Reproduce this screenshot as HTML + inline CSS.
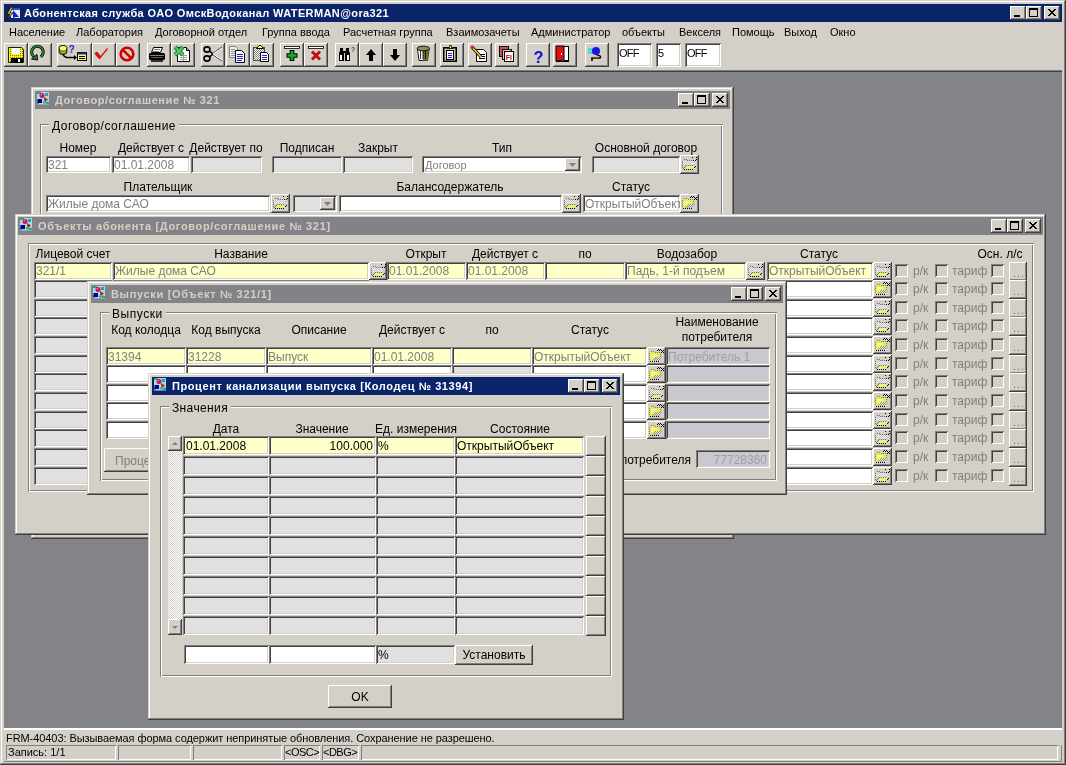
<!DOCTYPE html><html><head><meta charset="utf-8"><style>
*{margin:0;padding:0;box-sizing:border-box}
html,body{width:1066px;height:765px;overflow:hidden}
body{position:relative;background:#D4D0C8;font-family:"Liberation Sans",sans-serif;font-size:11px;color:#000}
div,svg{position:absolute}
.t{white-space:nowrap;will-change:transform}
.rb{background:#D4D0C8;box-shadow:inset -1px -1px #404040,inset 1px 1px #fff,inset -2px -2px #808080}
.fr{box-shadow:inset -1px -1px #404040,inset 1px 1px #D4D0C8,inset -2px -2px #808080,inset 2px 2px #fff}
.sk{box-shadow:inset 1px 1px #808080,inset -1px -1px #fff,inset 2px 2px #404040,inset -2px -2px #D4D0C8}
.gb{box-shadow:inset 1px 1px #808080,inset -1px -1px #fff,inset 2px 2px #fff,inset -2px -2px #808080}
.sp{box-shadow:inset 1px 1px #808080,inset -1px -1px #fff}
</style></head><body>
<svg width="0" height="0"><defs><pattern id="dth" width="2" height="2" patternUnits="userSpaceOnUse"><rect width="2" height="2" fill="#e8e8d8"/><rect width="1" height="1" fill="#909080"/><rect x="1" y="1" width="1" height="1" fill="#909080"/></pattern><pattern id="dthy" width="2" height="2" patternUnits="userSpaceOnUse"><rect width="2" height="2" fill="#f0f000"/><rect width="1" height="1" fill="#808000"/><rect x="1" y="1" width="1" height="1" fill="#ffff40"/></pattern><pattern id="dthg2" width="2" height="2" patternUnits="userSpaceOnUse"><rect width="2" height="2" fill="#f4f4f4"/><rect width="1" height="1" fill="#c4c4c4"/><rect x="1" y="1" width="1" height="1" fill="#c4c4c4"/></pattern><pattern id="dthg" width="2" height="2" patternUnits="userSpaceOnUse"><rect width="2" height="2" fill="#fff"/><rect width="1" height="1" fill="#808080"/><rect x="1" y="1" width="1" height="1" fill="#808080"/></pattern></defs></svg>
<div style="left:0;top:0;width:1066px;height:765px;box-shadow: inset -1px -1px #404040, inset 1px 1px #D4D0C8, inset -2px -2px #808080, inset 2px 2px #fff"></div>
<div style="left:4px;top:4px;width:1058px;height:18px;background:#0A246A"></div>
<svg style="left:5px;top:5px" width="16" height="16"><rect x="6" y="3" width="9" height="10" fill="#e8e8ff"/><rect x="6" y="3" width="9" height="2" fill="#3050c0"/><path d="M8 5 L14 12 L10 12 L8 14 Z" fill="#1820c8"/><path d="M6 2 L2 9 L5 9 L2 15 L8 8 L5 8 L8 2Z" fill="#f0e020" stroke="#000" stroke-width="0.7"/></svg>
<div class="t" style="left:24px;top:7px;font-size:11px;line-height:13px;color:#fff;font-weight:bold;letter-spacing:0.39px;">Абонентская служба ОАО ОмскВодоканал WATERMAN@ora321</div>
<div class="rb" style="left:1010px;top:6px;width:16px;height:14px;"><svg width="16" height="14"><rect x="4" y="9" width="6" height="1"/><rect x="4" y="10" width="6" height="1"/></svg></div>
<div class="rb" style="left:1026px;top:6px;width:16px;height:14px;"><svg width="16" height="14"><rect x="3" y="2" width="9" height="1"/><rect x="3" y="3" width="9" height="1"/><rect x="3" y="4" width="1" height="1"/><rect x="11" y="4" width="1" height="1"/><rect x="3" y="5" width="1" height="1"/><rect x="11" y="5" width="1" height="1"/><rect x="3" y="6" width="1" height="1"/><rect x="11" y="6" width="1" height="1"/><rect x="3" y="7" width="1" height="1"/><rect x="11" y="7" width="1" height="1"/><rect x="3" y="8" width="1" height="1"/><rect x="11" y="8" width="1" height="1"/><rect x="3" y="9" width="1" height="1"/><rect x="11" y="9" width="1" height="1"/><rect x="3" y="10" width="9" height="1"/></svg></div>
<div class="rb" style="left:1044px;top:6px;width:16px;height:14px;"><svg width="16" height="14"><rect x="4" y="3" width="2" height="1"/><rect x="10" y="3" width="2" height="1"/><rect x="5" y="4" width="2" height="1"/><rect x="9" y="4" width="2" height="1"/><rect x="6" y="5" width="4" height="1"/><rect x="7" y="6" width="2" height="1"/><rect x="6" y="7" width="4" height="1"/><rect x="5" y="8" width="2" height="1"/><rect x="9" y="8" width="2" height="1"/><rect x="4" y="9" width="2" height="1"/><rect x="10" y="9" width="2" height="1"/></svg></div>
<div class="t" style="left:9px;top:26px;font-size:11px;line-height:13px;">Население</div>
<div class="t" style="left:76px;top:26px;font-size:11px;line-height:13px;">Лаборатория</div>
<div class="t" style="left:155px;top:26px;font-size:11px;line-height:13px;">Договорной отдел</div>
<div class="t" style="left:262px;top:26px;font-size:11px;line-height:13px;">Группа ввода</div>
<div class="t" style="left:343px;top:26px;font-size:11px;line-height:13px;">Расчетная группа</div>
<div class="t" style="left:446px;top:26px;font-size:11px;line-height:13px;">Взаимозачеты</div>
<div class="t" style="left:531px;top:26px;font-size:11px;line-height:13px;">Администратор</div>
<div class="t" style="left:622px;top:26px;font-size:11px;line-height:13px;">объекты</div>
<div class="t" style="left:679px;top:26px;font-size:11px;line-height:13px;">Векселя</div>
<div class="t" style="left:732px;top:26px;font-size:11px;line-height:13px;">Помощь</div>
<div class="t" style="left:784px;top:26px;font-size:11px;line-height:13px;">Выход</div>
<div class="t" style="left:830px;top:26px;font-size:11px;line-height:13px;">Окно</div>
<div class="rb" style="left:4px;top:43px;width:24px;height:24px;"></div>
<div class="rb" style="left:28px;top:43px;width:24px;height:24px;"></div>
<div class="rb" style="left:57px;top:43px;width:35px;height:24px;"></div>
<div class="rb" style="left:92px;top:43px;width:24px;height:24px;"></div>
<div class="rb" style="left:116px;top:43px;width:24px;height:24px;"></div>
<div class="rb" style="left:147px;top:43px;width:24px;height:24px;"></div>
<div class="rb" style="left:171px;top:43px;width:24px;height:24px;"></div>
<div class="rb" style="left:201px;top:43px;width:24px;height:24px;"></div>
<div class="rb" style="left:226px;top:43px;width:24px;height:24px;"></div>
<div class="rb" style="left:250px;top:43px;width:24px;height:24px;"></div>
<div class="rb" style="left:280px;top:43px;width:24px;height:24px;"></div>
<div class="rb" style="left:304px;top:43px;width:24px;height:24px;"></div>
<div class="rb" style="left:335px;top:43px;width:24px;height:24px;"></div>
<div class="rb" style="left:359px;top:43px;width:24px;height:24px;"></div>
<div class="rb" style="left:383px;top:43px;width:24px;height:24px;"></div>
<div class="rb" style="left:412px;top:43px;width:24px;height:24px;"></div>
<div class="rb" style="left:440px;top:43px;width:24px;height:24px;"></div>
<div class="rb" style="left:468px;top:43px;width:24px;height:24px;"></div>
<div class="rb" style="left:495px;top:43px;width:24px;height:24px;"></div>
<div class="rb" style="left:526px;top:43px;width:24px;height:24px;"></div>
<div class="rb" style="left:553px;top:43px;width:24px;height:24px;"></div>
<div class="rb" style="left:585px;top:43px;width:24px;height:24px;"></div>
<div style="left:4px;top:70px;width:1058px;height:1px;background:#808080"></div>
<div style="left:4px;top:71px;width:1058px;height:1px;background:#404040"></div>
<div class="sk" style="left:617px;top:43px;width:35px;height:24px;background:#fff"></div>
<div class="t" style="left:619px;top:47px;font-size:11px;line-height:13px;letter-spacing:-0.8px;">OFF</div>
<div class="sk" style="left:656px;top:43px;width:25px;height:24px;background:#fff"></div>
<div class="t" style="left:658px;top:47px;font-size:11px;line-height:13px;letter-spacing:-0.8px;">5</div>
<div class="sk" style="left:685px;top:43px;width:36px;height:24px;background:#fff"></div>
<div class="t" style="left:687px;top:47px;font-size:11px;line-height:13px;letter-spacing:-0.8px;">OFF</div>
<svg style="left:8px;top:47px" width="17" height="17"><path d="M0.5 0.5 h13 l2 2 v13 h-15z" fill="url(#dthy)" stroke="#202000"/><rect x="4" y="1" width="8" height="6" fill="#fff"/><rect x="3" y="11" width="12" height="5" fill="#000"/><rect x="10" y="12" width="2" height="3" fill="#fff"/></svg>
<svg style="left:28px;top:44px" width="20" height="20"><path d="M12.7 12.75 A5.8 5.8 0 1 0 5.7 12.4" fill="none" stroke="#000" stroke-width="3.0"/><path d="M12.7 12.75 A5.8 5.8 0 1 0 5.7 12.4" fill="none" stroke="#2a8a2a" stroke-width="1.6"/><path d="M3.5 15 L9.5 16 L9 10.5Z" fill="#2a8a2a" stroke="#000" stroke-width="1"/></svg>
<svg style="left:58px;top:44px" width="30" height="18"><ellipse cx="5" cy="3.5" rx="3.8" ry="2" fill="#ffff60" stroke="#000" stroke-width="0.9"/><path d="M1.2 3.5 v5 a3.8 2 0 0 0 7.6 0 v-5" fill="#ffff60" stroke="#000" stroke-width="0.9"/><path d="M1.2 5.3 a3.8 2 0 0 0 7.6 0 M1.2 7.3 a3.8 2 0 0 0 7.6 0" fill="none" stroke="#000" stroke-width="0.8"/><path d="M5 10.8 Q7 14 11 13.5 H17" fill="none" stroke="#000" stroke-width="1.3"/><path d="M16 11 L19 13.5 L16 16Z" fill="#000"/><text x="10.5" y="9" font-size="10" font-weight="bold" fill="#2828c8" font-family="Liberation Sans">?</text><rect x="19.5" y="8.5" width="9" height="8" fill="#ffff60" stroke="#000" stroke-width="1"/><rect x="19.5" y="8.5" width="9" height="2" fill="#2020a0"/><path d="M21 12.5 h6 M21 14.5 h6" stroke="#000" stroke-width="1"/></svg>
<svg style="left:94px;top:47px" width="16" height="16"><path d="M1 6.5 L5.5 11.5 L13.5 1.5" fill="none" stroke="#d81010" stroke-width="1.3"/><path d="M1.5 6 L5.5 11 L6.5 9.5 L3 5.5Z" fill="#d81010" stroke="#d81010" stroke-width="1.2"/></svg>
<svg style="left:119px;top:46px" width="16" height="16"><circle cx="8" cy="8" r="6.3" fill="none" stroke="#d00000" stroke-width="2.6"/><path d="M3.8 3.8 L12.2 12.2" stroke="#d00000" stroke-width="2.6"/></svg>
<svg style="left:148px;top:46px" width="18" height="17"><path d="M5.5 1.5 h9 l-2 5 h-9z" fill="#fff" stroke="#000"/><path d="M6 3.5 h6 M5 5.5 h6" stroke="#808080"/><path d="M2 7 h14 l1 1 v5 l-1 1 h-14 l-1 -1 v-5z" fill="#000"/><rect x="2" y="9" width="14" height="1" fill="#808080"/><rect x="3" y="11" width="12" height="1" fill="#505050"/><rect x="7" y="11" width="4" height="1" fill="#c04040"/><rect x="3" y="14" width="12" height="2" fill="#303030"/></svg>
<svg style="left:173px;top:45px" width="18" height="18"><path d="M4.5 2.5 h9 l3 3 v11 h-12z" fill="#fff" stroke="#000"/><path d="M13.5 2.5 v3 h3" fill="#c0c0c0" stroke="#000"/><path d="M7 10.5 h7 M7 12.5 h7 M7 14.5 h7 M10.5 9 v7" stroke="#a0a0a0"/><path d="M2 2 L10 10 M10 2 L2 10" stroke="#207a30" stroke-width="4"/><path d="M2 2 L10 10 M10 2 L2 10" stroke="#58c868" stroke-width="2"/></svg>
<svg style="left:203px;top:46px" width="20" height="16"><ellipse cx="4" cy="3.5" rx="3" ry="2.6" fill="none" stroke="#000" stroke-width="1.6"/><ellipse cx="4" cy="12.5" rx="3" ry="2.6" fill="none" stroke="#000" stroke-width="1.6"/><path d="M6.5 5 L10 8 L6.5 11" stroke="#000" stroke-width="1.6" fill="none"/><path d="M9 8 L19 1 M9 8 L19 15" stroke="#000" stroke-width="0.8"/><path d="M10 8 L19 2 M10 8 L19 14" stroke="#fff" stroke-width="1"/></svg>
<svg style="left:228px;top:45px" width="18" height="18"><path d="M1.5 1.5 h6 l2 2 v9 h-8z" fill="#f0f0f0" stroke="#808080"/><path d="M3 4.5 h4 M3 6.5 h4 M3 8.5 h4 M3 10.5 h4" stroke="#909090"/><path d="M7.5 5.5 h6 l3 3 v9 h-9z" fill="#fff" stroke="#000"/><path d="M9 9.5 h6 M9 11.5 h6 M9 13.5 h6 M9 15.5 h5" stroke="#2020d0"/></svg>
<svg style="left:252px;top:44px" width="18" height="19"><rect x="1.5" y="3.5" width="11" height="13" fill="url(#dthg)" stroke="#505050"/><path d="M4.5 4.5 l2.5 -3 h2 l2.5 3 z" fill="#ffff60" stroke="#000"/><path d="M8.5 8.5 h6 l2 2 v7 h-8z" fill="#fff" stroke="#000"/><path d="M10 11.5 h5 M10 13.5 h5 M10 15.5 h5" stroke="#2020d0"/></svg>
<svg style="left:283px;top:45px" width="18" height="18"><rect x="1.5" y="1.5" width="15" height="2" fill="#fff" stroke="#000" stroke-width="0.8"/><path d="M9 5 V16 M3.5 10.5 H14.5" stroke="#000" stroke-width="4.6"/><path d="M9 6 V15 M4.5 10.5 H13.5" stroke="#10b020" stroke-width="2.6"/></svg>
<svg style="left:307px;top:45px" width="18" height="18"><rect x="1.5" y="1.5" width="15" height="2" fill="#fff" stroke="#000" stroke-width="0.8"/><path d="M5 6.5 L13 14.5 M13 6.5 L5 14.5" stroke="#c01010" stroke-width="3"/></svg>
<svg style="left:338px;top:46px" width="18" height="16"><path d="M2 2 h3 v3 h2 v2 h-1 v8 h-5 v-8 l1 -2z" fill="#000"/><path d="M9 2 h3 v3 l1 2 v8 h-5 v-8 h-1 v-2 h2z" fill="#000" transform="translate(-1 0)"/><rect x="2" y="9" width="2" height="5" fill="#fff"/><rect x="9" y="9" width="2" height="5" fill="#fff"/><text x="13" y="6" font-size="7" fill="#000" font-family="Liberation Sans">?</text></svg>
<svg style="left:363px;top:47px" width="16" height="16"><path d="M8 2 L13 8 H10 V14 H6 V8 H3Z" fill="#000"/></svg>
<svg style="left:387px;top:47px" width="16" height="16"><path d="M8 14 L13 8 H10 V2 H6 V8 H3Z" fill="#000"/></svg>
<svg style="left:415px;top:45px" width="17" height="17"><path d="M2.5 4 L4 15.5 H12.5 L14 4Z" fill="#fff" stroke="#000" stroke-width="0.9"/><path d="M8 4 L14 4 L12.5 15.5 H8z" fill="#707030"/><path d="M5.5 6 V14 M8 6 V14 M10.5 6 V14" stroke="#000" stroke-width="0.8"/><ellipse cx="8.3" cy="3.5" rx="6.3" ry="2.3" fill="#909050" stroke="#000" stroke-width="0.9"/></svg>
<svg style="left:442px;top:45px" width="17" height="18"><rect x="1.5" y="2.5" width="13" height="14" fill="#c8c8a0" stroke="#000"/><rect x="2" y="3" width="12" height="13" fill="none" stroke="#000" stroke-width="1"/><path d="M5.5 3.5 v-1 h2 v-2 h2 v2 h2 v1z" fill="#ffff60" stroke="#000" stroke-width="0.8"/><rect x="4.5" y="5.5" width="7" height="9" fill="#fff" stroke="#000"/><path d="M6 8.5 h4 M6 10.5 h4 M6 12.5 h4" stroke="#2020d0"/></svg>
<svg style="left:470px;top:45px" width="18" height="18"><path d="M6.5 4.5 h7 l3 3 v9 h-10z" fill="#fff" stroke="#000"/><path d="M9 9.5 h6 M10 11.5 h5 M9 13.5 h6" stroke="#000"/><path d="M2 2 L11 12" stroke="#000" stroke-width="3.2"/><path d="M2 2 L11 12" stroke="#f0d020" stroke-width="1.6"/><circle cx="2.2" cy="2.2" r="1.7" fill="#e02040"/></svg>
<svg style="left:498px;top:45px" width="17" height="17"><rect x="1.5" y="1.5" width="9" height="10" fill="#c85050" stroke="#000" stroke-width="0.9"/><rect x="4.5" y="4.5" width="9" height="10" fill="#e0c0c0" stroke="#000" stroke-width="0.9"/><rect x="6.5" y="6.5" width="9" height="10" fill="#fff" stroke="#000" stroke-width="1"/><text x="7.8" y="14.5" font-size="7" font-weight="bold" fill="#d00000" font-family="Liberation Sans">FI</text></svg>
<svg style="left:530px;top:47px" width="16" height="18"><text x="3.5" y="16" font-size="16" font-weight="bold" fill="#1010c8" font-family="Liberation Sans">?</text></svg>
<svg style="left:555px;top:45px" width="16" height="18"><rect x="1.5" y="1.5" width="12" height="15" fill="#fff" stroke="#000" stroke-width="1"/><path d="M1 1 H9 V15 L1 16Z" fill="#e01010"/><path d="M1 1 H9 V15 L1 16Z" fill="none" stroke="#000" stroke-width="1"/><rect x="6" y="8" width="1" height="2" fill="#fff"/><path d="M9 15.5 H13" stroke="#000"/></svg>
<svg style="left:587px;top:44px" width="17" height="18"><path d="M1 5.5 h5 M1 8.5 h5" stroke="#20d8e0" stroke-width="2"/><circle cx="9" cy="7" r="4" fill="#1818e0"/><path d="M9.5 11 Q15 11.5 13 14 H5 v3" fill="none" stroke="#000" stroke-width="1.6"/><path d="M10 12 Q13 12.5 12 13 H6" fill="none" stroke="#d0b020" stroke-width="0.8"/></svg>
<div style="left:4px;top:72px;width:1058px;height:656px;background:#848387"></div>
<div style="left:4px;top:728px;width:1058px;height:2px;background:#fff"></div>
<div class="t" style="left:6px;top:732px;font-size:11px;line-height:13px;letter-spacing:-0.07px;">FRM-40403: Вызываемая форма содержит непринятые обновления. Сохранение не разрешено.</div>
<div class="sp" style="left:6px;top:745px;width:110px;height:15px;"></div>
<div class="sp" style="left:118px;top:745px;width:73px;height:15px;"></div>
<div class="sp" style="left:193px;top:745px;width:89px;height:15px;"></div>
<div class="sp" style="left:284px;top:745px;width:36px;height:15px;"></div>
<div class="sp" style="left:322px;top:745px;width:37px;height:15px;"></div>
<div class="sp" style="left:361px;top:745px;width:697px;height:15px;"></div>
<div class="t" style="left:8px;top:746px;font-size:11px;line-height:13px;">Запись: 1/1</div>
<div style="left:4px;top:761px;width:1058px;height:1px;background:#808080"></div>
<div style="left:1061px;top:745px;width:1px;height:17px;background:#808080"></div>
<div class="t" style="left:285px;top:746px;font-size:11px;line-height:13px;letter-spacing:-0.5px;">&lt;OSC&gt;</div>
<div class="t" style="left:323px;top:746px;font-size:11px;line-height:13px;letter-spacing:-0.5px;">&lt;DBG&gt;</div>
<div class="fr" style="left:31px;top:87px;width:703px;height:452px;background:#D4D0C8"></div>
<div style="left:35px;top:91px;width:695px;height:18px;background:#838286"></div>
<svg style="left:36px;top:92px" width="14" height="13"><rect x="1" y="0" width="12" height="12" fill="#a8dce0"/><path d="M1 0 h4 v2 h-4z M9 1 h3 v3 h-3z M1 9 h2 v3 h-2z M10 10 h3 v2 h-3z" fill="#28a0a8"/><rect x="1" y="12" width="12" height="1" fill="#c0a8d0" opacity=".6"/><circle cx="6" cy="3.5" r="2.5" fill="#d0105a"/><circle cx="5.3" cy="2.7" r="0.8" fill="#ff90c0"/><rect x="1.5" y="7" width="4.5" height="4" fill="#000090"/><path d="M8 5 L12 7.5 L8.5 10Z" fill="#c01818"/><rect x="7" y="9.5" width="5" height="2" fill="#30b080"/></svg>
<div class="t" style="left:55px;top:94px;font-size:11px;line-height:13px;color:#D4D0C8;font-weight:bold;letter-spacing:0.59px;">Договор/соглашение № 321</div>
<div class="rb" style="left:678px;top:93px;width:16px;height:14px;"><svg width="16" height="14"><rect x="4" y="9" width="6" height="1"/><rect x="4" y="10" width="6" height="1"/></svg></div>
<div class="rb" style="left:694px;top:93px;width:16px;height:14px;"><svg width="16" height="14"><rect x="3" y="2" width="9" height="1"/><rect x="3" y="3" width="9" height="1"/><rect x="3" y="4" width="1" height="1"/><rect x="11" y="4" width="1" height="1"/><rect x="3" y="5" width="1" height="1"/><rect x="11" y="5" width="1" height="1"/><rect x="3" y="6" width="1" height="1"/><rect x="11" y="6" width="1" height="1"/><rect x="3" y="7" width="1" height="1"/><rect x="11" y="7" width="1" height="1"/><rect x="3" y="8" width="1" height="1"/><rect x="11" y="8" width="1" height="1"/><rect x="3" y="9" width="1" height="1"/><rect x="11" y="9" width="1" height="1"/><rect x="3" y="10" width="9" height="1"/></svg></div>
<div class="rb" style="left:712px;top:93px;width:16px;height:14px;"><svg width="16" height="14"><rect x="4" y="3" width="2" height="1"/><rect x="10" y="3" width="2" height="1"/><rect x="5" y="4" width="2" height="1"/><rect x="9" y="4" width="2" height="1"/><rect x="6" y="5" width="4" height="1"/><rect x="7" y="6" width="2" height="1"/><rect x="6" y="7" width="4" height="1"/><rect x="5" y="8" width="2" height="1"/><rect x="9" y="8" width="2" height="1"/><rect x="4" y="9" width="2" height="1"/><rect x="10" y="9" width="2" height="1"/></svg></div>
<div class="gb" style="left:40px;top:124px;width:683px;height:300px;"></div>
<div class="t" style="left:52px;top:119px;font-size:12px;line-height:14px;letter-spacing:0.47px;background:#D4D0C8;padding:0 3px;margin-left:-3px;">Договор/соглашение</div>
<div class="t" style="left:-72px;top:141px;font-size:12px;line-height:14px;width:300px;text-align:center;">Номер</div>
<div class="t" style="left:1px;top:141px;font-size:12px;line-height:14px;width:300px;text-align:center;">Действует с</div>
<div class="t" style="left:76px;top:141px;font-size:12px;line-height:14px;width:300px;text-align:center;">Действует по</div>
<div class="t" style="left:157px;top:141px;font-size:12px;line-height:14px;width:300px;text-align:center;">Подписан</div>
<div class="t" style="left:228px;top:141px;font-size:12px;line-height:14px;width:300px;text-align:center;">Закрыт</div>
<div class="t" style="left:352px;top:141px;font-size:12px;line-height:14px;width:300px;text-align:center;">Тип</div>
<div class="t" style="left:496px;top:141px;font-size:12px;line-height:14px;width:300px;text-align:center;">Основной договор</div>
<div class="sk" style="left:46px;top:156px;width:65px;height:17px;background:#fff"></div>
<div class="t" style="left:48px;top:158px;font-size:12px;line-height:14px;color:#808080;">321</div>
<div class="sk" style="left:112px;top:156px;width:78px;height:17px;background:#fff"></div>
<div class="t" style="left:114px;top:158px;font-size:12px;line-height:14px;color:#808080;">01.01.2008</div>
<div class="sk" style="left:191px;top:156px;width:71px;height:17px;background:#E0E0E0"></div>
<div class="sk" style="left:272px;top:156px;width:70px;height:17px;background:#E0E0E0"></div>
<div class="sk" style="left:343px;top:156px;width:70px;height:17px;background:#E0E0E0"></div>
<div class="sk" style="left:422px;top:156px;width:160px;height:17px;background:#fff"></div>
<div class="rb" style="left:565px;top:158px;width:15px;height:13px;"><svg width="15" height="13"><path d="M4 5 H11 L7.5 9 Z" fill="#808080"/></svg></div>
<div class="t" style="left:425px;top:159px;font-size:11px;line-height:13px;color:#808080;">Договор</div>
<div class="sk" style="left:592px;top:156px;width:88px;height:17px;background:#E0E0E0"></div>
<div class="rb" style="left:680px;top:155px;width:19px;height:19px;"><svg width="19" height="18"><path d="M3 6 h11 v4 h-11z" fill="url(#dthg2)"/><path d="M6 11 h9 l-3 3 h-8z" fill="#eef070"/><rect x="4" y="4" width="1" height="1" fill="#707070"/><rect x="6" y="4" width="1" height="1" fill="#707070"/><rect x="7" y="5" width="1" height="1" fill="#707070"/><rect x="9" y="5" width="1" height="1" fill="#707070"/><rect x="11" y="5" width="1" height="1" fill="#707070"/><rect x="2" y="6" width="1" height="1" fill="#707070"/><rect x="2" y="8" width="1" height="1" fill="#707070"/><rect x="2" y="10" width="1" height="1" fill="#707070"/><rect x="2" y="12" width="1" height="1" fill="#707070"/><rect x="6" y="10" width="1" height="1" fill="#707070"/><rect x="8" y="10" width="1" height="1" fill="#707070"/><rect x="10" y="10" width="1" height="1" fill="#707070"/><rect x="12" y="10" width="1" height="1" fill="#707070"/><rect x="3" y="13" width="1" height="1" fill="#707070"/><rect x="4" y="12" width="1" height="1" fill="#707070"/><rect x="5" y="11" width="1" height="1" fill="#707070"/><rect x="12" y="2" width="1" height="1" fill="#000"/><rect x="16" y="2" width="1" height="1" fill="#000"/><rect x="16" y="4" width="1" height="1" fill="#000"/><rect x="15" y="5" width="1" height="1" fill="#000"/><rect x="13" y="5" width="1" height="1" fill="#000"/><rect x="4" y="14" width="1" height="1" fill="#000"/><rect x="6" y="14" width="1" height="1" fill="#000"/><rect x="8" y="14" width="1" height="1" fill="#000"/><rect x="10" y="14" width="1" height="1" fill="#000"/><rect x="12" y="14" width="1" height="1" fill="#000"/><rect x="14" y="12" width="1" height="1" fill="#000"/><rect x="15" y="11" width="1" height="1" fill="#000"/></svg></div>
<div class="t" style="left:8px;top:180px;font-size:12px;line-height:14px;width:300px;text-align:center;">Плательщик</div>
<div class="t" style="left:300px;top:180px;font-size:12px;line-height:14px;width:300px;text-align:center;">Балансодержатель</div>
<div class="t" style="left:481px;top:180px;font-size:12px;line-height:14px;width:300px;text-align:center;">Статус</div>
<div class="sk" style="left:46px;top:195px;width:224px;height:17px;background:#fff"></div>
<div class="t" style="left:48px;top:197px;font-size:12px;line-height:14px;color:#808080;">Жилые дома САО</div>
<div class="rb" style="left:271px;top:194px;width:19px;height:19px;"><svg width="19" height="18"><path d="M3 6 h11 v4 h-11z" fill="url(#dthg2)"/><path d="M6 11 h9 l-3 3 h-8z" fill="#eef070"/><rect x="4" y="4" width="1" height="1" fill="#707070"/><rect x="6" y="4" width="1" height="1" fill="#707070"/><rect x="7" y="5" width="1" height="1" fill="#707070"/><rect x="9" y="5" width="1" height="1" fill="#707070"/><rect x="11" y="5" width="1" height="1" fill="#707070"/><rect x="2" y="6" width="1" height="1" fill="#707070"/><rect x="2" y="8" width="1" height="1" fill="#707070"/><rect x="2" y="10" width="1" height="1" fill="#707070"/><rect x="2" y="12" width="1" height="1" fill="#707070"/><rect x="6" y="10" width="1" height="1" fill="#707070"/><rect x="8" y="10" width="1" height="1" fill="#707070"/><rect x="10" y="10" width="1" height="1" fill="#707070"/><rect x="12" y="10" width="1" height="1" fill="#707070"/><rect x="3" y="13" width="1" height="1" fill="#707070"/><rect x="4" y="12" width="1" height="1" fill="#707070"/><rect x="5" y="11" width="1" height="1" fill="#707070"/><rect x="12" y="2" width="1" height="1" fill="#000"/><rect x="16" y="2" width="1" height="1" fill="#000"/><rect x="16" y="4" width="1" height="1" fill="#000"/><rect x="15" y="5" width="1" height="1" fill="#000"/><rect x="13" y="5" width="1" height="1" fill="#000"/><rect x="4" y="14" width="1" height="1" fill="#000"/><rect x="6" y="14" width="1" height="1" fill="#000"/><rect x="8" y="14" width="1" height="1" fill="#000"/><rect x="10" y="14" width="1" height="1" fill="#000"/><rect x="12" y="14" width="1" height="1" fill="#000"/><rect x="14" y="12" width="1" height="1" fill="#000"/><rect x="15" y="11" width="1" height="1" fill="#000"/></svg></div>
<div class="sk" style="left:293px;top:195px;width:44px;height:17px;background:#E0E0E0"></div>
<div class="rb" style="left:320px;top:197px;width:15px;height:13px;"><svg width="15" height="13"><path d="M4 5 H11 L7.5 9 Z" fill="#808080"/></svg></div>
<div class="sk" style="left:339px;top:195px;width:223px;height:17px;background:#fff"></div>
<div class="rb" style="left:562px;top:194px;width:19px;height:19px;"><svg width="19" height="18"><path d="M3 6 h11 v4 h-11z" fill="url(#dthg2)"/><path d="M6 11 h9 l-3 3 h-8z" fill="#eef070"/><rect x="4" y="4" width="1" height="1" fill="#707070"/><rect x="6" y="4" width="1" height="1" fill="#707070"/><rect x="7" y="5" width="1" height="1" fill="#707070"/><rect x="9" y="5" width="1" height="1" fill="#707070"/><rect x="11" y="5" width="1" height="1" fill="#707070"/><rect x="2" y="6" width="1" height="1" fill="#707070"/><rect x="2" y="8" width="1" height="1" fill="#707070"/><rect x="2" y="10" width="1" height="1" fill="#707070"/><rect x="2" y="12" width="1" height="1" fill="#707070"/><rect x="6" y="10" width="1" height="1" fill="#707070"/><rect x="8" y="10" width="1" height="1" fill="#707070"/><rect x="10" y="10" width="1" height="1" fill="#707070"/><rect x="12" y="10" width="1" height="1" fill="#707070"/><rect x="3" y="13" width="1" height="1" fill="#707070"/><rect x="4" y="12" width="1" height="1" fill="#707070"/><rect x="5" y="11" width="1" height="1" fill="#707070"/><rect x="12" y="2" width="1" height="1" fill="#000"/><rect x="16" y="2" width="1" height="1" fill="#000"/><rect x="16" y="4" width="1" height="1" fill="#000"/><rect x="15" y="5" width="1" height="1" fill="#000"/><rect x="13" y="5" width="1" height="1" fill="#000"/><rect x="4" y="14" width="1" height="1" fill="#000"/><rect x="6" y="14" width="1" height="1" fill="#000"/><rect x="8" y="14" width="1" height="1" fill="#000"/><rect x="10" y="14" width="1" height="1" fill="#000"/><rect x="12" y="14" width="1" height="1" fill="#000"/><rect x="14" y="12" width="1" height="1" fill="#000"/><rect x="15" y="11" width="1" height="1" fill="#000"/></svg></div>
<div class="sk" style="left:583px;top:195px;width:97px;height:17px;background:#fff"></div>
<div class="t" style="left:585px;top:197px;font-size:12px;line-height:14px;color:#808080;">ОткрытыйОбъект</div>
<div class="rb" style="left:680px;top:194px;width:19px;height:19px;"><svg width="19" height="18"><path d="M3 5 h4 l1 1 h5 v3 l-1 2 l-3 3 h-6z" fill="#ecec50"/><path d="M4 7 h6 l-2 4 h-4z" fill="#f8f890"/><path d="M8 10 h7 l-3 4 h-7z" fill="url(#dth)"/><rect x="4" y="4" width="1" height="1" fill="#808040"/><rect x="6" y="4" width="1" height="1" fill="#808040"/><rect x="8" y="5" width="1" height="1" fill="#808040"/><rect x="10" y="5" width="1" height="1" fill="#808040"/><rect x="12" y="5" width="1" height="1" fill="#808040"/><rect x="2" y="6" width="1" height="1" fill="#808040"/><rect x="2" y="8" width="1" height="1" fill="#808040"/><rect x="2" y="10" width="1" height="1" fill="#808040"/><rect x="2" y="12" width="1" height="1" fill="#808040"/><rect x="13" y="7" width="1" height="1" fill="#808040"/><rect x="13" y="9" width="1" height="1" fill="#808040"/><rect x="3" y="14" width="1" height="1" fill="#000"/><rect x="5" y="14" width="1" height="1" fill="#000"/><rect x="7" y="14" width="1" height="1" fill="#000"/><rect x="9" y="14" width="1" height="1" fill="#000"/><rect x="11" y="14" width="1" height="1" fill="#000"/><rect x="10" y="3" width="1" height="1" fill="#000"/><rect x="11" y="2" width="1" height="1" fill="#000"/><rect x="13" y="2" width="1" height="1" fill="#000"/><rect x="14" y="3" width="1" height="1" fill="#000"/><rect x="15" y="4" width="1" height="1" fill="#000"/><rect x="16" y="3" width="1" height="1" fill="#000"/><rect x="16" y="5" width="1" height="1" fill="#000"/><rect x="14" y="5" width="1" height="1" fill="#000"/><rect x="12" y="3" width="1" height="1" fill="#000"/></svg></div>
<div class="fr" style="left:15px;top:214px;width:1031px;height:321px;background:#D4D0C8"></div>
<div style="left:18px;top:217px;width:1025px;height:18px;background:#838286"></div>
<svg style="left:19px;top:218px" width="14" height="13"><rect x="1" y="0" width="12" height="12" fill="#a8dce0"/><path d="M1 0 h4 v2 h-4z M9 1 h3 v3 h-3z M1 9 h2 v3 h-2z M10 10 h3 v2 h-3z" fill="#28a0a8"/><rect x="1" y="12" width="12" height="1" fill="#c0a8d0" opacity=".6"/><circle cx="6" cy="3.5" r="2.5" fill="#d0105a"/><circle cx="5.3" cy="2.7" r="0.8" fill="#ff90c0"/><rect x="1.5" y="7" width="4.5" height="4" fill="#000090"/><path d="M8 5 L12 7.5 L8.5 10Z" fill="#c01818"/><rect x="7" y="9.5" width="5" height="2" fill="#30b080"/></svg>
<div class="t" style="left:38px;top:220px;font-size:11px;line-height:13px;color:#D4D0C8;font-weight:bold;letter-spacing:0.66px;">Объекты абонента [Договор/соглашение № 321]</div>
<div class="rb" style="left:991px;top:219px;width:16px;height:14px;"><svg width="16" height="14"><rect x="4" y="9" width="6" height="1"/><rect x="4" y="10" width="6" height="1"/></svg></div>
<div class="rb" style="left:1007px;top:219px;width:16px;height:14px;"><svg width="16" height="14"><rect x="3" y="2" width="9" height="1"/><rect x="3" y="3" width="9" height="1"/><rect x="3" y="4" width="1" height="1"/><rect x="11" y="4" width="1" height="1"/><rect x="3" y="5" width="1" height="1"/><rect x="11" y="5" width="1" height="1"/><rect x="3" y="6" width="1" height="1"/><rect x="11" y="6" width="1" height="1"/><rect x="3" y="7" width="1" height="1"/><rect x="11" y="7" width="1" height="1"/><rect x="3" y="8" width="1" height="1"/><rect x="11" y="8" width="1" height="1"/><rect x="3" y="9" width="1" height="1"/><rect x="11" y="9" width="1" height="1"/><rect x="3" y="10" width="9" height="1"/></svg></div>
<div class="rb" style="left:1025px;top:219px;width:16px;height:14px;"><svg width="16" height="14"><rect x="4" y="3" width="2" height="1"/><rect x="10" y="3" width="2" height="1"/><rect x="5" y="4" width="2" height="1"/><rect x="9" y="4" width="2" height="1"/><rect x="6" y="5" width="4" height="1"/><rect x="7" y="6" width="2" height="1"/><rect x="6" y="7" width="4" height="1"/><rect x="5" y="8" width="2" height="1"/><rect x="9" y="8" width="2" height="1"/><rect x="4" y="9" width="2" height="1"/><rect x="10" y="9" width="2" height="1"/></svg></div>
<div class="gb" style="left:28px;top:243px;width:1006px;height:249px;"></div>
<div class="t" style="left:-77px;top:247px;font-size:12px;line-height:14px;width:300px;text-align:center;">Лицевой счет</div>
<div class="t" style="left:91px;top:247px;font-size:12px;line-height:14px;width:300px;text-align:center;">Название</div>
<div class="t" style="left:276px;top:247px;font-size:12px;line-height:14px;width:300px;text-align:center;">Открыт</div>
<div class="t" style="left:355px;top:247px;font-size:12px;line-height:14px;width:300px;text-align:center;">Действует с</div>
<div class="t" style="left:435px;top:247px;font-size:12px;line-height:14px;width:300px;text-align:center;">по</div>
<div class="t" style="left:537px;top:247px;font-size:12px;line-height:14px;width:300px;text-align:center;">Водозабор</div>
<div class="t" style="left:669px;top:247px;font-size:12px;line-height:14px;width:300px;text-align:center;">Статус</div>
<div class="t" style="left:850px;top:247px;font-size:12px;line-height:14px;width:300px;text-align:center;">Осн. л/с</div>
<div class="sk" style="left:34px;top:262px;width:78px;height:18px;background:#FFFFC8"></div>
<div class="sk" style="left:113px;top:262px;width:256px;height:18px;background:#FFFFC8"></div>
<div class="rb" style="left:369px;top:262px;width:18px;height:18px;"><svg width="19" height="18"><path d="M3 6 h11 v4 h-11z" fill="url(#dthg2)"/><path d="M6 11 h9 l-3 3 h-8z" fill="#eef070"/><rect x="4" y="4" width="1" height="1" fill="#707070"/><rect x="6" y="4" width="1" height="1" fill="#707070"/><rect x="7" y="5" width="1" height="1" fill="#707070"/><rect x="9" y="5" width="1" height="1" fill="#707070"/><rect x="11" y="5" width="1" height="1" fill="#707070"/><rect x="2" y="6" width="1" height="1" fill="#707070"/><rect x="2" y="8" width="1" height="1" fill="#707070"/><rect x="2" y="10" width="1" height="1" fill="#707070"/><rect x="2" y="12" width="1" height="1" fill="#707070"/><rect x="6" y="10" width="1" height="1" fill="#707070"/><rect x="8" y="10" width="1" height="1" fill="#707070"/><rect x="10" y="10" width="1" height="1" fill="#707070"/><rect x="12" y="10" width="1" height="1" fill="#707070"/><rect x="3" y="13" width="1" height="1" fill="#707070"/><rect x="4" y="12" width="1" height="1" fill="#707070"/><rect x="5" y="11" width="1" height="1" fill="#707070"/><rect x="12" y="2" width="1" height="1" fill="#000"/><rect x="16" y="2" width="1" height="1" fill="#000"/><rect x="16" y="4" width="1" height="1" fill="#000"/><rect x="15" y="5" width="1" height="1" fill="#000"/><rect x="13" y="5" width="1" height="1" fill="#000"/><rect x="4" y="14" width="1" height="1" fill="#000"/><rect x="6" y="14" width="1" height="1" fill="#000"/><rect x="8" y="14" width="1" height="1" fill="#000"/><rect x="10" y="14" width="1" height="1" fill="#000"/><rect x="12" y="14" width="1" height="1" fill="#000"/><rect x="14" y="12" width="1" height="1" fill="#000"/><rect x="15" y="11" width="1" height="1" fill="#000"/></svg></div>
<div class="sk" style="left:387px;top:262px;width:79px;height:18px;background:#FFFFC8"></div>
<div class="sk" style="left:466px;top:262px;width:79px;height:18px;background:#FFFFC8"></div>
<div class="sk" style="left:545px;top:262px;width:80px;height:18px;background:#FFFFC8"></div>
<div class="sk" style="left:625px;top:262px;width:121px;height:18px;background:#FFFFC8"></div>
<div class="rb" style="left:746px;top:262px;width:19px;height:18px;"><svg width="19" height="18"><path d="M3 6 h11 v4 h-11z" fill="url(#dthg2)"/><path d="M6 11 h9 l-3 3 h-8z" fill="#eef070"/><rect x="4" y="4" width="1" height="1" fill="#707070"/><rect x="6" y="4" width="1" height="1" fill="#707070"/><rect x="7" y="5" width="1" height="1" fill="#707070"/><rect x="9" y="5" width="1" height="1" fill="#707070"/><rect x="11" y="5" width="1" height="1" fill="#707070"/><rect x="2" y="6" width="1" height="1" fill="#707070"/><rect x="2" y="8" width="1" height="1" fill="#707070"/><rect x="2" y="10" width="1" height="1" fill="#707070"/><rect x="2" y="12" width="1" height="1" fill="#707070"/><rect x="6" y="10" width="1" height="1" fill="#707070"/><rect x="8" y="10" width="1" height="1" fill="#707070"/><rect x="10" y="10" width="1" height="1" fill="#707070"/><rect x="12" y="10" width="1" height="1" fill="#707070"/><rect x="3" y="13" width="1" height="1" fill="#707070"/><rect x="4" y="12" width="1" height="1" fill="#707070"/><rect x="5" y="11" width="1" height="1" fill="#707070"/><rect x="12" y="2" width="1" height="1" fill="#000"/><rect x="16" y="2" width="1" height="1" fill="#000"/><rect x="16" y="4" width="1" height="1" fill="#000"/><rect x="15" y="5" width="1" height="1" fill="#000"/><rect x="13" y="5" width="1" height="1" fill="#000"/><rect x="4" y="14" width="1" height="1" fill="#000"/><rect x="6" y="14" width="1" height="1" fill="#000"/><rect x="8" y="14" width="1" height="1" fill="#000"/><rect x="10" y="14" width="1" height="1" fill="#000"/><rect x="12" y="14" width="1" height="1" fill="#000"/><rect x="14" y="12" width="1" height="1" fill="#000"/><rect x="15" y="11" width="1" height="1" fill="#000"/></svg></div>
<div class="sk" style="left:767px;top:262px;width:106px;height:18px;background:#FFFFC8"></div>
<div class="rb" style="left:873px;top:262px;width:19px;height:18px;"><svg width="19" height="18"><path d="M3 6 h11 v4 h-11z" fill="url(#dthg2)"/><path d="M6 11 h9 l-3 3 h-8z" fill="#eef070"/><rect x="4" y="4" width="1" height="1" fill="#707070"/><rect x="6" y="4" width="1" height="1" fill="#707070"/><rect x="7" y="5" width="1" height="1" fill="#707070"/><rect x="9" y="5" width="1" height="1" fill="#707070"/><rect x="11" y="5" width="1" height="1" fill="#707070"/><rect x="2" y="6" width="1" height="1" fill="#707070"/><rect x="2" y="8" width="1" height="1" fill="#707070"/><rect x="2" y="10" width="1" height="1" fill="#707070"/><rect x="2" y="12" width="1" height="1" fill="#707070"/><rect x="6" y="10" width="1" height="1" fill="#707070"/><rect x="8" y="10" width="1" height="1" fill="#707070"/><rect x="10" y="10" width="1" height="1" fill="#707070"/><rect x="12" y="10" width="1" height="1" fill="#707070"/><rect x="3" y="13" width="1" height="1" fill="#707070"/><rect x="4" y="12" width="1" height="1" fill="#707070"/><rect x="5" y="11" width="1" height="1" fill="#707070"/><rect x="12" y="2" width="1" height="1" fill="#000"/><rect x="16" y="2" width="1" height="1" fill="#000"/><rect x="16" y="4" width="1" height="1" fill="#000"/><rect x="15" y="5" width="1" height="1" fill="#000"/><rect x="13" y="5" width="1" height="1" fill="#000"/><rect x="4" y="14" width="1" height="1" fill="#000"/><rect x="6" y="14" width="1" height="1" fill="#000"/><rect x="8" y="14" width="1" height="1" fill="#000"/><rect x="10" y="14" width="1" height="1" fill="#000"/><rect x="12" y="14" width="1" height="1" fill="#000"/><rect x="14" y="12" width="1" height="1" fill="#000"/><rect x="15" y="11" width="1" height="1" fill="#000"/></svg></div>
<div class="sk" style="left:895px;top:264px;width:13px;height:13px;background:#D4D0C8"></div>
<div class="t" style="left:913px;top:264px;font-size:12px;line-height:14px;color:#808080;">р/к</div>
<div class="sk" style="left:935px;top:264px;width:13px;height:13px;background:#D4D0C8"></div>
<div class="t" style="left:952px;top:264px;font-size:12px;line-height:14px;color:#808080;">тариф</div>
<div class="sk" style="left:991px;top:264px;width:13px;height:13px;background:#D4D0C8"></div>
<div class="rb" style="left:1009px;top:262px;width:18px;height:19px;"><div class="t" style="left:4px;top:5px;font-size:11px;color:#808080;line-height:13px;letter-spacing:1px">...</div></div>
<div class="sk" style="left:34px;top:280px;width:78px;height:18px;background:#E0E0E0"></div>
<div class="sk" style="left:113px;top:280px;width:256px;height:18px;background:#E0E0E0"></div>
<div class="sk" style="left:767px;top:280px;width:106px;height:18px;background:#fff"></div>
<div class="rb" style="left:873px;top:280px;width:19px;height:18px;"><svg width="19" height="18"><path d="M3 5 h4 l1 1 h5 v3 l-1 2 l-3 3 h-6z" fill="#ecec50"/><path d="M4 7 h6 l-2 4 h-4z" fill="#f8f890"/><path d="M8 10 h7 l-3 4 h-7z" fill="url(#dth)"/><rect x="4" y="4" width="1" height="1" fill="#808040"/><rect x="6" y="4" width="1" height="1" fill="#808040"/><rect x="8" y="5" width="1" height="1" fill="#808040"/><rect x="10" y="5" width="1" height="1" fill="#808040"/><rect x="12" y="5" width="1" height="1" fill="#808040"/><rect x="2" y="6" width="1" height="1" fill="#808040"/><rect x="2" y="8" width="1" height="1" fill="#808040"/><rect x="2" y="10" width="1" height="1" fill="#808040"/><rect x="2" y="12" width="1" height="1" fill="#808040"/><rect x="13" y="7" width="1" height="1" fill="#808040"/><rect x="13" y="9" width="1" height="1" fill="#808040"/><rect x="3" y="14" width="1" height="1" fill="#000"/><rect x="5" y="14" width="1" height="1" fill="#000"/><rect x="7" y="14" width="1" height="1" fill="#000"/><rect x="9" y="14" width="1" height="1" fill="#000"/><rect x="11" y="14" width="1" height="1" fill="#000"/><rect x="10" y="3" width="1" height="1" fill="#000"/><rect x="11" y="2" width="1" height="1" fill="#000"/><rect x="13" y="2" width="1" height="1" fill="#000"/><rect x="14" y="3" width="1" height="1" fill="#000"/><rect x="15" y="4" width="1" height="1" fill="#000"/><rect x="16" y="3" width="1" height="1" fill="#000"/><rect x="16" y="5" width="1" height="1" fill="#000"/><rect x="14" y="5" width="1" height="1" fill="#000"/><rect x="12" y="3" width="1" height="1" fill="#000"/></svg></div>
<div class="sk" style="left:895px;top:282px;width:13px;height:13px;background:#D4D0C8"></div>
<div class="t" style="left:913px;top:282px;font-size:12px;line-height:14px;color:#808080;">р/к</div>
<div class="sk" style="left:935px;top:282px;width:13px;height:13px;background:#D4D0C8"></div>
<div class="t" style="left:952px;top:282px;font-size:12px;line-height:14px;color:#808080;">тариф</div>
<div class="sk" style="left:991px;top:282px;width:13px;height:13px;background:#D4D0C8"></div>
<div class="rb" style="left:1009px;top:280px;width:18px;height:19px;"><div class="t" style="left:4px;top:5px;font-size:11px;color:#808080;line-height:13px;letter-spacing:1px">...</div></div>
<div class="sk" style="left:34px;top:299px;width:78px;height:18px;background:#E0E0E0"></div>
<div class="sk" style="left:113px;top:299px;width:256px;height:18px;background:#E0E0E0"></div>
<div class="sk" style="left:767px;top:299px;width:106px;height:18px;background:#fff"></div>
<div class="rb" style="left:873px;top:299px;width:19px;height:18px;"><svg width="19" height="18"><path d="M3 6 h11 v4 h-11z" fill="url(#dthg2)"/><path d="M6 11 h9 l-3 3 h-8z" fill="#eef070"/><rect x="4" y="4" width="1" height="1" fill="#707070"/><rect x="6" y="4" width="1" height="1" fill="#707070"/><rect x="7" y="5" width="1" height="1" fill="#707070"/><rect x="9" y="5" width="1" height="1" fill="#707070"/><rect x="11" y="5" width="1" height="1" fill="#707070"/><rect x="2" y="6" width="1" height="1" fill="#707070"/><rect x="2" y="8" width="1" height="1" fill="#707070"/><rect x="2" y="10" width="1" height="1" fill="#707070"/><rect x="2" y="12" width="1" height="1" fill="#707070"/><rect x="6" y="10" width="1" height="1" fill="#707070"/><rect x="8" y="10" width="1" height="1" fill="#707070"/><rect x="10" y="10" width="1" height="1" fill="#707070"/><rect x="12" y="10" width="1" height="1" fill="#707070"/><rect x="3" y="13" width="1" height="1" fill="#707070"/><rect x="4" y="12" width="1" height="1" fill="#707070"/><rect x="5" y="11" width="1" height="1" fill="#707070"/><rect x="12" y="2" width="1" height="1" fill="#000"/><rect x="16" y="2" width="1" height="1" fill="#000"/><rect x="16" y="4" width="1" height="1" fill="#000"/><rect x="15" y="5" width="1" height="1" fill="#000"/><rect x="13" y="5" width="1" height="1" fill="#000"/><rect x="4" y="14" width="1" height="1" fill="#000"/><rect x="6" y="14" width="1" height="1" fill="#000"/><rect x="8" y="14" width="1" height="1" fill="#000"/><rect x="10" y="14" width="1" height="1" fill="#000"/><rect x="12" y="14" width="1" height="1" fill="#000"/><rect x="14" y="12" width="1" height="1" fill="#000"/><rect x="15" y="11" width="1" height="1" fill="#000"/></svg></div>
<div class="sk" style="left:895px;top:301px;width:13px;height:13px;background:#D4D0C8"></div>
<div class="t" style="left:913px;top:301px;font-size:12px;line-height:14px;color:#808080;">р/к</div>
<div class="sk" style="left:935px;top:301px;width:13px;height:13px;background:#D4D0C8"></div>
<div class="t" style="left:952px;top:301px;font-size:12px;line-height:14px;color:#808080;">тариф</div>
<div class="sk" style="left:991px;top:301px;width:13px;height:13px;background:#D4D0C8"></div>
<div class="rb" style="left:1009px;top:299px;width:18px;height:19px;"><div class="t" style="left:4px;top:5px;font-size:11px;color:#808080;line-height:13px;letter-spacing:1px">...</div></div>
<div class="sk" style="left:34px;top:317px;width:78px;height:18px;background:#E0E0E0"></div>
<div class="sk" style="left:113px;top:317px;width:256px;height:18px;background:#E0E0E0"></div>
<div class="sk" style="left:767px;top:317px;width:106px;height:18px;background:#fff"></div>
<div class="rb" style="left:873px;top:317px;width:19px;height:18px;"><svg width="19" height="18"><path d="M3 6 h11 v4 h-11z" fill="url(#dthg2)"/><path d="M6 11 h9 l-3 3 h-8z" fill="#eef070"/><rect x="4" y="4" width="1" height="1" fill="#707070"/><rect x="6" y="4" width="1" height="1" fill="#707070"/><rect x="7" y="5" width="1" height="1" fill="#707070"/><rect x="9" y="5" width="1" height="1" fill="#707070"/><rect x="11" y="5" width="1" height="1" fill="#707070"/><rect x="2" y="6" width="1" height="1" fill="#707070"/><rect x="2" y="8" width="1" height="1" fill="#707070"/><rect x="2" y="10" width="1" height="1" fill="#707070"/><rect x="2" y="12" width="1" height="1" fill="#707070"/><rect x="6" y="10" width="1" height="1" fill="#707070"/><rect x="8" y="10" width="1" height="1" fill="#707070"/><rect x="10" y="10" width="1" height="1" fill="#707070"/><rect x="12" y="10" width="1" height="1" fill="#707070"/><rect x="3" y="13" width="1" height="1" fill="#707070"/><rect x="4" y="12" width="1" height="1" fill="#707070"/><rect x="5" y="11" width="1" height="1" fill="#707070"/><rect x="12" y="2" width="1" height="1" fill="#000"/><rect x="16" y="2" width="1" height="1" fill="#000"/><rect x="16" y="4" width="1" height="1" fill="#000"/><rect x="15" y="5" width="1" height="1" fill="#000"/><rect x="13" y="5" width="1" height="1" fill="#000"/><rect x="4" y="14" width="1" height="1" fill="#000"/><rect x="6" y="14" width="1" height="1" fill="#000"/><rect x="8" y="14" width="1" height="1" fill="#000"/><rect x="10" y="14" width="1" height="1" fill="#000"/><rect x="12" y="14" width="1" height="1" fill="#000"/><rect x="14" y="12" width="1" height="1" fill="#000"/><rect x="15" y="11" width="1" height="1" fill="#000"/></svg></div>
<div class="sk" style="left:895px;top:319px;width:13px;height:13px;background:#D4D0C8"></div>
<div class="t" style="left:913px;top:319px;font-size:12px;line-height:14px;color:#808080;">р/к</div>
<div class="sk" style="left:935px;top:319px;width:13px;height:13px;background:#D4D0C8"></div>
<div class="t" style="left:952px;top:319px;font-size:12px;line-height:14px;color:#808080;">тариф</div>
<div class="sk" style="left:991px;top:319px;width:13px;height:13px;background:#D4D0C8"></div>
<div class="rb" style="left:1009px;top:317px;width:18px;height:19px;"><div class="t" style="left:4px;top:5px;font-size:11px;color:#808080;line-height:13px;letter-spacing:1px">...</div></div>
<div class="sk" style="left:34px;top:336px;width:78px;height:18px;background:#E0E0E0"></div>
<div class="sk" style="left:113px;top:336px;width:256px;height:18px;background:#E0E0E0"></div>
<div class="sk" style="left:767px;top:336px;width:106px;height:18px;background:#fff"></div>
<div class="rb" style="left:873px;top:336px;width:19px;height:18px;"><svg width="19" height="18"><path d="M3 5 h4 l1 1 h5 v3 l-1 2 l-3 3 h-6z" fill="#ecec50"/><path d="M4 7 h6 l-2 4 h-4z" fill="#f8f890"/><path d="M8 10 h7 l-3 4 h-7z" fill="url(#dth)"/><rect x="4" y="4" width="1" height="1" fill="#808040"/><rect x="6" y="4" width="1" height="1" fill="#808040"/><rect x="8" y="5" width="1" height="1" fill="#808040"/><rect x="10" y="5" width="1" height="1" fill="#808040"/><rect x="12" y="5" width="1" height="1" fill="#808040"/><rect x="2" y="6" width="1" height="1" fill="#808040"/><rect x="2" y="8" width="1" height="1" fill="#808040"/><rect x="2" y="10" width="1" height="1" fill="#808040"/><rect x="2" y="12" width="1" height="1" fill="#808040"/><rect x="13" y="7" width="1" height="1" fill="#808040"/><rect x="13" y="9" width="1" height="1" fill="#808040"/><rect x="3" y="14" width="1" height="1" fill="#000"/><rect x="5" y="14" width="1" height="1" fill="#000"/><rect x="7" y="14" width="1" height="1" fill="#000"/><rect x="9" y="14" width="1" height="1" fill="#000"/><rect x="11" y="14" width="1" height="1" fill="#000"/><rect x="10" y="3" width="1" height="1" fill="#000"/><rect x="11" y="2" width="1" height="1" fill="#000"/><rect x="13" y="2" width="1" height="1" fill="#000"/><rect x="14" y="3" width="1" height="1" fill="#000"/><rect x="15" y="4" width="1" height="1" fill="#000"/><rect x="16" y="3" width="1" height="1" fill="#000"/><rect x="16" y="5" width="1" height="1" fill="#000"/><rect x="14" y="5" width="1" height="1" fill="#000"/><rect x="12" y="3" width="1" height="1" fill="#000"/></svg></div>
<div class="sk" style="left:895px;top:338px;width:13px;height:13px;background:#D4D0C8"></div>
<div class="t" style="left:913px;top:338px;font-size:12px;line-height:14px;color:#808080;">р/к</div>
<div class="sk" style="left:935px;top:338px;width:13px;height:13px;background:#D4D0C8"></div>
<div class="t" style="left:952px;top:338px;font-size:12px;line-height:14px;color:#808080;">тариф</div>
<div class="sk" style="left:991px;top:338px;width:13px;height:13px;background:#D4D0C8"></div>
<div class="rb" style="left:1009px;top:336px;width:18px;height:19px;"><div class="t" style="left:4px;top:5px;font-size:11px;color:#808080;line-height:13px;letter-spacing:1px">...</div></div>
<div class="sk" style="left:34px;top:355px;width:78px;height:18px;background:#E0E0E0"></div>
<div class="sk" style="left:113px;top:355px;width:256px;height:18px;background:#E0E0E0"></div>
<div class="sk" style="left:767px;top:355px;width:106px;height:18px;background:#fff"></div>
<div class="rb" style="left:873px;top:355px;width:19px;height:18px;"><svg width="19" height="18"><path d="M3 6 h11 v4 h-11z" fill="url(#dthg2)"/><path d="M6 11 h9 l-3 3 h-8z" fill="#eef070"/><rect x="4" y="4" width="1" height="1" fill="#707070"/><rect x="6" y="4" width="1" height="1" fill="#707070"/><rect x="7" y="5" width="1" height="1" fill="#707070"/><rect x="9" y="5" width="1" height="1" fill="#707070"/><rect x="11" y="5" width="1" height="1" fill="#707070"/><rect x="2" y="6" width="1" height="1" fill="#707070"/><rect x="2" y="8" width="1" height="1" fill="#707070"/><rect x="2" y="10" width="1" height="1" fill="#707070"/><rect x="2" y="12" width="1" height="1" fill="#707070"/><rect x="6" y="10" width="1" height="1" fill="#707070"/><rect x="8" y="10" width="1" height="1" fill="#707070"/><rect x="10" y="10" width="1" height="1" fill="#707070"/><rect x="12" y="10" width="1" height="1" fill="#707070"/><rect x="3" y="13" width="1" height="1" fill="#707070"/><rect x="4" y="12" width="1" height="1" fill="#707070"/><rect x="5" y="11" width="1" height="1" fill="#707070"/><rect x="12" y="2" width="1" height="1" fill="#000"/><rect x="16" y="2" width="1" height="1" fill="#000"/><rect x="16" y="4" width="1" height="1" fill="#000"/><rect x="15" y="5" width="1" height="1" fill="#000"/><rect x="13" y="5" width="1" height="1" fill="#000"/><rect x="4" y="14" width="1" height="1" fill="#000"/><rect x="6" y="14" width="1" height="1" fill="#000"/><rect x="8" y="14" width="1" height="1" fill="#000"/><rect x="10" y="14" width="1" height="1" fill="#000"/><rect x="12" y="14" width="1" height="1" fill="#000"/><rect x="14" y="12" width="1" height="1" fill="#000"/><rect x="15" y="11" width="1" height="1" fill="#000"/></svg></div>
<div class="sk" style="left:895px;top:357px;width:13px;height:13px;background:#D4D0C8"></div>
<div class="t" style="left:913px;top:357px;font-size:12px;line-height:14px;color:#808080;">р/к</div>
<div class="sk" style="left:935px;top:357px;width:13px;height:13px;background:#D4D0C8"></div>
<div class="t" style="left:952px;top:357px;font-size:12px;line-height:14px;color:#808080;">тариф</div>
<div class="sk" style="left:991px;top:357px;width:13px;height:13px;background:#D4D0C8"></div>
<div class="rb" style="left:1009px;top:355px;width:18px;height:19px;"><div class="t" style="left:4px;top:5px;font-size:11px;color:#808080;line-height:13px;letter-spacing:1px">...</div></div>
<div class="sk" style="left:34px;top:373px;width:78px;height:18px;background:#E0E0E0"></div>
<div class="sk" style="left:113px;top:373px;width:256px;height:18px;background:#E0E0E0"></div>
<div class="sk" style="left:767px;top:373px;width:106px;height:18px;background:#fff"></div>
<div class="rb" style="left:873px;top:373px;width:19px;height:18px;"><svg width="19" height="18"><path d="M3 6 h11 v4 h-11z" fill="url(#dthg2)"/><path d="M6 11 h9 l-3 3 h-8z" fill="#eef070"/><rect x="4" y="4" width="1" height="1" fill="#707070"/><rect x="6" y="4" width="1" height="1" fill="#707070"/><rect x="7" y="5" width="1" height="1" fill="#707070"/><rect x="9" y="5" width="1" height="1" fill="#707070"/><rect x="11" y="5" width="1" height="1" fill="#707070"/><rect x="2" y="6" width="1" height="1" fill="#707070"/><rect x="2" y="8" width="1" height="1" fill="#707070"/><rect x="2" y="10" width="1" height="1" fill="#707070"/><rect x="2" y="12" width="1" height="1" fill="#707070"/><rect x="6" y="10" width="1" height="1" fill="#707070"/><rect x="8" y="10" width="1" height="1" fill="#707070"/><rect x="10" y="10" width="1" height="1" fill="#707070"/><rect x="12" y="10" width="1" height="1" fill="#707070"/><rect x="3" y="13" width="1" height="1" fill="#707070"/><rect x="4" y="12" width="1" height="1" fill="#707070"/><rect x="5" y="11" width="1" height="1" fill="#707070"/><rect x="12" y="2" width="1" height="1" fill="#000"/><rect x="16" y="2" width="1" height="1" fill="#000"/><rect x="16" y="4" width="1" height="1" fill="#000"/><rect x="15" y="5" width="1" height="1" fill="#000"/><rect x="13" y="5" width="1" height="1" fill="#000"/><rect x="4" y="14" width="1" height="1" fill="#000"/><rect x="6" y="14" width="1" height="1" fill="#000"/><rect x="8" y="14" width="1" height="1" fill="#000"/><rect x="10" y="14" width="1" height="1" fill="#000"/><rect x="12" y="14" width="1" height="1" fill="#000"/><rect x="14" y="12" width="1" height="1" fill="#000"/><rect x="15" y="11" width="1" height="1" fill="#000"/></svg></div>
<div class="sk" style="left:895px;top:375px;width:13px;height:13px;background:#D4D0C8"></div>
<div class="t" style="left:913px;top:375px;font-size:12px;line-height:14px;color:#808080;">р/к</div>
<div class="sk" style="left:935px;top:375px;width:13px;height:13px;background:#D4D0C8"></div>
<div class="t" style="left:952px;top:375px;font-size:12px;line-height:14px;color:#808080;">тариф</div>
<div class="sk" style="left:991px;top:375px;width:13px;height:13px;background:#D4D0C8"></div>
<div class="rb" style="left:1009px;top:373px;width:18px;height:19px;"><div class="t" style="left:4px;top:5px;font-size:11px;color:#808080;line-height:13px;letter-spacing:1px">...</div></div>
<div class="sk" style="left:34px;top:392px;width:78px;height:18px;background:#E0E0E0"></div>
<div class="sk" style="left:113px;top:392px;width:256px;height:18px;background:#E0E0E0"></div>
<div class="sk" style="left:767px;top:392px;width:106px;height:18px;background:#fff"></div>
<div class="rb" style="left:873px;top:392px;width:19px;height:18px;"><svg width="19" height="18"><path d="M3 5 h4 l1 1 h5 v3 l-1 2 l-3 3 h-6z" fill="#ecec50"/><path d="M4 7 h6 l-2 4 h-4z" fill="#f8f890"/><path d="M8 10 h7 l-3 4 h-7z" fill="url(#dth)"/><rect x="4" y="4" width="1" height="1" fill="#808040"/><rect x="6" y="4" width="1" height="1" fill="#808040"/><rect x="8" y="5" width="1" height="1" fill="#808040"/><rect x="10" y="5" width="1" height="1" fill="#808040"/><rect x="12" y="5" width="1" height="1" fill="#808040"/><rect x="2" y="6" width="1" height="1" fill="#808040"/><rect x="2" y="8" width="1" height="1" fill="#808040"/><rect x="2" y="10" width="1" height="1" fill="#808040"/><rect x="2" y="12" width="1" height="1" fill="#808040"/><rect x="13" y="7" width="1" height="1" fill="#808040"/><rect x="13" y="9" width="1" height="1" fill="#808040"/><rect x="3" y="14" width="1" height="1" fill="#000"/><rect x="5" y="14" width="1" height="1" fill="#000"/><rect x="7" y="14" width="1" height="1" fill="#000"/><rect x="9" y="14" width="1" height="1" fill="#000"/><rect x="11" y="14" width="1" height="1" fill="#000"/><rect x="10" y="3" width="1" height="1" fill="#000"/><rect x="11" y="2" width="1" height="1" fill="#000"/><rect x="13" y="2" width="1" height="1" fill="#000"/><rect x="14" y="3" width="1" height="1" fill="#000"/><rect x="15" y="4" width="1" height="1" fill="#000"/><rect x="16" y="3" width="1" height="1" fill="#000"/><rect x="16" y="5" width="1" height="1" fill="#000"/><rect x="14" y="5" width="1" height="1" fill="#000"/><rect x="12" y="3" width="1" height="1" fill="#000"/></svg></div>
<div class="sk" style="left:895px;top:394px;width:13px;height:13px;background:#D4D0C8"></div>
<div class="t" style="left:913px;top:394px;font-size:12px;line-height:14px;color:#808080;">р/к</div>
<div class="sk" style="left:935px;top:394px;width:13px;height:13px;background:#D4D0C8"></div>
<div class="t" style="left:952px;top:394px;font-size:12px;line-height:14px;color:#808080;">тариф</div>
<div class="sk" style="left:991px;top:394px;width:13px;height:13px;background:#D4D0C8"></div>
<div class="rb" style="left:1009px;top:392px;width:18px;height:19px;"><div class="t" style="left:4px;top:5px;font-size:11px;color:#808080;line-height:13px;letter-spacing:1px">...</div></div>
<div class="sk" style="left:34px;top:411px;width:78px;height:18px;background:#E0E0E0"></div>
<div class="sk" style="left:113px;top:411px;width:256px;height:18px;background:#E0E0E0"></div>
<div class="sk" style="left:767px;top:411px;width:106px;height:18px;background:#fff"></div>
<div class="rb" style="left:873px;top:411px;width:19px;height:18px;"><svg width="19" height="18"><path d="M3 6 h11 v4 h-11z" fill="url(#dthg2)"/><path d="M6 11 h9 l-3 3 h-8z" fill="#eef070"/><rect x="4" y="4" width="1" height="1" fill="#707070"/><rect x="6" y="4" width="1" height="1" fill="#707070"/><rect x="7" y="5" width="1" height="1" fill="#707070"/><rect x="9" y="5" width="1" height="1" fill="#707070"/><rect x="11" y="5" width="1" height="1" fill="#707070"/><rect x="2" y="6" width="1" height="1" fill="#707070"/><rect x="2" y="8" width="1" height="1" fill="#707070"/><rect x="2" y="10" width="1" height="1" fill="#707070"/><rect x="2" y="12" width="1" height="1" fill="#707070"/><rect x="6" y="10" width="1" height="1" fill="#707070"/><rect x="8" y="10" width="1" height="1" fill="#707070"/><rect x="10" y="10" width="1" height="1" fill="#707070"/><rect x="12" y="10" width="1" height="1" fill="#707070"/><rect x="3" y="13" width="1" height="1" fill="#707070"/><rect x="4" y="12" width="1" height="1" fill="#707070"/><rect x="5" y="11" width="1" height="1" fill="#707070"/><rect x="12" y="2" width="1" height="1" fill="#000"/><rect x="16" y="2" width="1" height="1" fill="#000"/><rect x="16" y="4" width="1" height="1" fill="#000"/><rect x="15" y="5" width="1" height="1" fill="#000"/><rect x="13" y="5" width="1" height="1" fill="#000"/><rect x="4" y="14" width="1" height="1" fill="#000"/><rect x="6" y="14" width="1" height="1" fill="#000"/><rect x="8" y="14" width="1" height="1" fill="#000"/><rect x="10" y="14" width="1" height="1" fill="#000"/><rect x="12" y="14" width="1" height="1" fill="#000"/><rect x="14" y="12" width="1" height="1" fill="#000"/><rect x="15" y="11" width="1" height="1" fill="#000"/></svg></div>
<div class="sk" style="left:895px;top:413px;width:13px;height:13px;background:#D4D0C8"></div>
<div class="t" style="left:913px;top:413px;font-size:12px;line-height:14px;color:#808080;">р/к</div>
<div class="sk" style="left:935px;top:413px;width:13px;height:13px;background:#D4D0C8"></div>
<div class="t" style="left:952px;top:413px;font-size:12px;line-height:14px;color:#808080;">тариф</div>
<div class="sk" style="left:991px;top:413px;width:13px;height:13px;background:#D4D0C8"></div>
<div class="rb" style="left:1009px;top:411px;width:18px;height:19px;"><div class="t" style="left:4px;top:5px;font-size:11px;color:#808080;line-height:13px;letter-spacing:1px">...</div></div>
<div class="sk" style="left:34px;top:429px;width:78px;height:18px;background:#E0E0E0"></div>
<div class="sk" style="left:113px;top:429px;width:256px;height:18px;background:#E0E0E0"></div>
<div class="sk" style="left:767px;top:429px;width:106px;height:18px;background:#fff"></div>
<div class="rb" style="left:873px;top:429px;width:19px;height:18px;"><svg width="19" height="18"><path d="M3 6 h11 v4 h-11z" fill="url(#dthg2)"/><path d="M6 11 h9 l-3 3 h-8z" fill="#eef070"/><rect x="4" y="4" width="1" height="1" fill="#707070"/><rect x="6" y="4" width="1" height="1" fill="#707070"/><rect x="7" y="5" width="1" height="1" fill="#707070"/><rect x="9" y="5" width="1" height="1" fill="#707070"/><rect x="11" y="5" width="1" height="1" fill="#707070"/><rect x="2" y="6" width="1" height="1" fill="#707070"/><rect x="2" y="8" width="1" height="1" fill="#707070"/><rect x="2" y="10" width="1" height="1" fill="#707070"/><rect x="2" y="12" width="1" height="1" fill="#707070"/><rect x="6" y="10" width="1" height="1" fill="#707070"/><rect x="8" y="10" width="1" height="1" fill="#707070"/><rect x="10" y="10" width="1" height="1" fill="#707070"/><rect x="12" y="10" width="1" height="1" fill="#707070"/><rect x="3" y="13" width="1" height="1" fill="#707070"/><rect x="4" y="12" width="1" height="1" fill="#707070"/><rect x="5" y="11" width="1" height="1" fill="#707070"/><rect x="12" y="2" width="1" height="1" fill="#000"/><rect x="16" y="2" width="1" height="1" fill="#000"/><rect x="16" y="4" width="1" height="1" fill="#000"/><rect x="15" y="5" width="1" height="1" fill="#000"/><rect x="13" y="5" width="1" height="1" fill="#000"/><rect x="4" y="14" width="1" height="1" fill="#000"/><rect x="6" y="14" width="1" height="1" fill="#000"/><rect x="8" y="14" width="1" height="1" fill="#000"/><rect x="10" y="14" width="1" height="1" fill="#000"/><rect x="12" y="14" width="1" height="1" fill="#000"/><rect x="14" y="12" width="1" height="1" fill="#000"/><rect x="15" y="11" width="1" height="1" fill="#000"/></svg></div>
<div class="sk" style="left:895px;top:431px;width:13px;height:13px;background:#D4D0C8"></div>
<div class="t" style="left:913px;top:431px;font-size:12px;line-height:14px;color:#808080;">р/к</div>
<div class="sk" style="left:935px;top:431px;width:13px;height:13px;background:#D4D0C8"></div>
<div class="t" style="left:952px;top:431px;font-size:12px;line-height:14px;color:#808080;">тариф</div>
<div class="sk" style="left:991px;top:431px;width:13px;height:13px;background:#D4D0C8"></div>
<div class="rb" style="left:1009px;top:429px;width:18px;height:19px;"><div class="t" style="left:4px;top:5px;font-size:11px;color:#808080;line-height:13px;letter-spacing:1px">...</div></div>
<div class="sk" style="left:34px;top:448px;width:78px;height:18px;background:#E0E0E0"></div>
<div class="sk" style="left:113px;top:448px;width:256px;height:18px;background:#E0E0E0"></div>
<div class="sk" style="left:767px;top:448px;width:106px;height:18px;background:#fff"></div>
<div class="rb" style="left:873px;top:448px;width:19px;height:18px;"><svg width="19" height="18"><path d="M3 5 h4 l1 1 h5 v3 l-1 2 l-3 3 h-6z" fill="#ecec50"/><path d="M4 7 h6 l-2 4 h-4z" fill="#f8f890"/><path d="M8 10 h7 l-3 4 h-7z" fill="url(#dth)"/><rect x="4" y="4" width="1" height="1" fill="#808040"/><rect x="6" y="4" width="1" height="1" fill="#808040"/><rect x="8" y="5" width="1" height="1" fill="#808040"/><rect x="10" y="5" width="1" height="1" fill="#808040"/><rect x="12" y="5" width="1" height="1" fill="#808040"/><rect x="2" y="6" width="1" height="1" fill="#808040"/><rect x="2" y="8" width="1" height="1" fill="#808040"/><rect x="2" y="10" width="1" height="1" fill="#808040"/><rect x="2" y="12" width="1" height="1" fill="#808040"/><rect x="13" y="7" width="1" height="1" fill="#808040"/><rect x="13" y="9" width="1" height="1" fill="#808040"/><rect x="3" y="14" width="1" height="1" fill="#000"/><rect x="5" y="14" width="1" height="1" fill="#000"/><rect x="7" y="14" width="1" height="1" fill="#000"/><rect x="9" y="14" width="1" height="1" fill="#000"/><rect x="11" y="14" width="1" height="1" fill="#000"/><rect x="10" y="3" width="1" height="1" fill="#000"/><rect x="11" y="2" width="1" height="1" fill="#000"/><rect x="13" y="2" width="1" height="1" fill="#000"/><rect x="14" y="3" width="1" height="1" fill="#000"/><rect x="15" y="4" width="1" height="1" fill="#000"/><rect x="16" y="3" width="1" height="1" fill="#000"/><rect x="16" y="5" width="1" height="1" fill="#000"/><rect x="14" y="5" width="1" height="1" fill="#000"/><rect x="12" y="3" width="1" height="1" fill="#000"/></svg></div>
<div class="sk" style="left:895px;top:450px;width:13px;height:13px;background:#D4D0C8"></div>
<div class="t" style="left:913px;top:450px;font-size:12px;line-height:14px;color:#808080;">р/к</div>
<div class="sk" style="left:935px;top:450px;width:13px;height:13px;background:#D4D0C8"></div>
<div class="t" style="left:952px;top:450px;font-size:12px;line-height:14px;color:#808080;">тариф</div>
<div class="sk" style="left:991px;top:450px;width:13px;height:13px;background:#D4D0C8"></div>
<div class="rb" style="left:1009px;top:448px;width:18px;height:19px;"><div class="t" style="left:4px;top:5px;font-size:11px;color:#808080;line-height:13px;letter-spacing:1px">...</div></div>
<div class="sk" style="left:34px;top:467px;width:78px;height:18px;background:#E0E0E0"></div>
<div class="sk" style="left:113px;top:467px;width:256px;height:18px;background:#E0E0E0"></div>
<div class="sk" style="left:767px;top:467px;width:106px;height:18px;background:#fff"></div>
<div class="rb" style="left:873px;top:467px;width:19px;height:18px;"><svg width="19" height="18"><path d="M3 6 h11 v4 h-11z" fill="url(#dthg2)"/><path d="M6 11 h9 l-3 3 h-8z" fill="#eef070"/><rect x="4" y="4" width="1" height="1" fill="#707070"/><rect x="6" y="4" width="1" height="1" fill="#707070"/><rect x="7" y="5" width="1" height="1" fill="#707070"/><rect x="9" y="5" width="1" height="1" fill="#707070"/><rect x="11" y="5" width="1" height="1" fill="#707070"/><rect x="2" y="6" width="1" height="1" fill="#707070"/><rect x="2" y="8" width="1" height="1" fill="#707070"/><rect x="2" y="10" width="1" height="1" fill="#707070"/><rect x="2" y="12" width="1" height="1" fill="#707070"/><rect x="6" y="10" width="1" height="1" fill="#707070"/><rect x="8" y="10" width="1" height="1" fill="#707070"/><rect x="10" y="10" width="1" height="1" fill="#707070"/><rect x="12" y="10" width="1" height="1" fill="#707070"/><rect x="3" y="13" width="1" height="1" fill="#707070"/><rect x="4" y="12" width="1" height="1" fill="#707070"/><rect x="5" y="11" width="1" height="1" fill="#707070"/><rect x="12" y="2" width="1" height="1" fill="#000"/><rect x="16" y="2" width="1" height="1" fill="#000"/><rect x="16" y="4" width="1" height="1" fill="#000"/><rect x="15" y="5" width="1" height="1" fill="#000"/><rect x="13" y="5" width="1" height="1" fill="#000"/><rect x="4" y="14" width="1" height="1" fill="#000"/><rect x="6" y="14" width="1" height="1" fill="#000"/><rect x="8" y="14" width="1" height="1" fill="#000"/><rect x="10" y="14" width="1" height="1" fill="#000"/><rect x="12" y="14" width="1" height="1" fill="#000"/><rect x="14" y="12" width="1" height="1" fill="#000"/><rect x="15" y="11" width="1" height="1" fill="#000"/></svg></div>
<div class="sk" style="left:895px;top:469px;width:13px;height:13px;background:#D4D0C8"></div>
<div class="t" style="left:913px;top:469px;font-size:12px;line-height:14px;color:#808080;">р/к</div>
<div class="sk" style="left:935px;top:469px;width:13px;height:13px;background:#D4D0C8"></div>
<div class="t" style="left:952px;top:469px;font-size:12px;line-height:14px;color:#808080;">тариф</div>
<div class="sk" style="left:991px;top:469px;width:13px;height:13px;background:#D4D0C8"></div>
<div class="rb" style="left:1009px;top:467px;width:18px;height:19px;"><div class="t" style="left:4px;top:5px;font-size:11px;color:#808080;line-height:13px;letter-spacing:1px">...</div></div>
<div class="t" style="left:36px;top:264px;font-size:12px;line-height:14px;color:#808080;">321/1</div>
<div class="t" style="left:115px;top:264px;font-size:12px;line-height:14px;color:#808080;">Жилые дома САО</div>
<div class="t" style="left:389px;top:264px;font-size:12px;line-height:14px;color:#808080;">01.01.2008</div>
<div class="t" style="left:468px;top:264px;font-size:12px;line-height:14px;color:#808080;">01.01.2008</div>
<div class="t" style="left:627px;top:264px;font-size:12px;line-height:14px;color:#808080;">Падь, 1-й подъем</div>
<div class="t" style="left:769px;top:264px;font-size:12px;line-height:14px;color:#808080;">ОткрытыйОбъект</div>
<div class="fr" style="left:87px;top:281px;width:700px;height:214px;background:#D4D0C8"></div>
<div style="left:91px;top:285px;width:692px;height:18px;background:#838286"></div>
<svg style="left:92px;top:286px" width="14" height="13"><rect x="1" y="0" width="12" height="12" fill="#a8dce0"/><path d="M1 0 h4 v2 h-4z M9 1 h3 v3 h-3z M1 9 h2 v3 h-2z M10 10 h3 v2 h-3z" fill="#28a0a8"/><rect x="1" y="12" width="12" height="1" fill="#c0a8d0" opacity=".6"/><circle cx="6" cy="3.5" r="2.5" fill="#d0105a"/><circle cx="5.3" cy="2.7" r="0.8" fill="#ff90c0"/><rect x="1.5" y="7" width="4.5" height="4" fill="#000090"/><path d="M8 5 L12 7.5 L8.5 10Z" fill="#c01818"/><rect x="7" y="9.5" width="5" height="2" fill="#30b080"/></svg>
<div class="t" style="left:111px;top:288px;font-size:11px;line-height:13px;color:#D4D0C8;font-weight:bold;letter-spacing:0.67px;">Выпуски [Объект № 321/1]</div>
<div class="rb" style="left:731px;top:287px;width:16px;height:14px;"><svg width="16" height="14"><rect x="4" y="9" width="6" height="1"/><rect x="4" y="10" width="6" height="1"/></svg></div>
<div class="rb" style="left:747px;top:287px;width:16px;height:14px;"><svg width="16" height="14"><rect x="3" y="2" width="9" height="1"/><rect x="3" y="3" width="9" height="1"/><rect x="3" y="4" width="1" height="1"/><rect x="11" y="4" width="1" height="1"/><rect x="3" y="5" width="1" height="1"/><rect x="11" y="5" width="1" height="1"/><rect x="3" y="6" width="1" height="1"/><rect x="11" y="6" width="1" height="1"/><rect x="3" y="7" width="1" height="1"/><rect x="11" y="7" width="1" height="1"/><rect x="3" y="8" width="1" height="1"/><rect x="11" y="8" width="1" height="1"/><rect x="3" y="9" width="1" height="1"/><rect x="11" y="9" width="1" height="1"/><rect x="3" y="10" width="9" height="1"/></svg></div>
<div class="rb" style="left:765px;top:287px;width:16px;height:14px;"><svg width="16" height="14"><rect x="4" y="3" width="2" height="1"/><rect x="10" y="3" width="2" height="1"/><rect x="5" y="4" width="2" height="1"/><rect x="9" y="4" width="2" height="1"/><rect x="6" y="5" width="4" height="1"/><rect x="7" y="6" width="2" height="1"/><rect x="6" y="7" width="4" height="1"/><rect x="5" y="8" width="2" height="1"/><rect x="9" y="8" width="2" height="1"/><rect x="4" y="9" width="2" height="1"/><rect x="10" y="9" width="2" height="1"/></svg></div>
<div class="gb" style="left:100px;top:312px;width:677px;height:169px;"></div>
<div class="t" style="left:112px;top:307px;font-size:12px;line-height:14px;letter-spacing:0.55px;background:#D4D0C8;padding:0 3px;margin-left:-3px;">Выпуски</div>
<div class="t" style="left:-4px;top:323px;font-size:12px;line-height:14px;width:300px;text-align:center;">Код колодца</div>
<div class="t" style="left:76px;top:323px;font-size:12px;line-height:14px;width:300px;text-align:center;">Код выпуска</div>
<div class="t" style="left:169px;top:323px;font-size:12px;line-height:14px;width:300px;text-align:center;">Описание</div>
<div class="t" style="left:262px;top:323px;font-size:12px;line-height:14px;width:300px;text-align:center;">Действует с</div>
<div class="t" style="left:342px;top:323px;font-size:12px;line-height:14px;width:300px;text-align:center;">по</div>
<div class="t" style="left:440px;top:323px;font-size:12px;line-height:14px;width:300px;text-align:center;">Статус</div>
<div class="t" style="left:567px;top:315px;font-size:12px;line-height:14px;width:300px;text-align:center;">Наименование</div>
<div class="t" style="left:567px;top:330px;font-size:12px;line-height:14px;width:300px;text-align:center;">потребителя</div>
<div class="sk" style="left:106px;top:347px;width:80px;height:18px;background:#FFFFC8"></div>
<div class="sk" style="left:186px;top:347px;width:80px;height:18px;background:#FFFFC8"></div>
<div class="sk" style="left:266px;top:347px;width:106px;height:18px;background:#FFFFC8"></div>
<div class="sk" style="left:372px;top:347px;width:80px;height:18px;background:#FFFFC8"></div>
<div class="sk" style="left:452px;top:347px;width:80px;height:18px;background:#FFFFC8"></div>
<div class="sk" style="left:532px;top:347px;width:115px;height:18px;background:#FFFFC8"></div>
<div class="rb" style="left:647px;top:347px;width:19px;height:18px;"><svg width="19" height="18"><path d="M3 5 h4 l1 1 h5 v3 l-1 2 l-3 3 h-6z" fill="#ecec50"/><path d="M4 7 h6 l-2 4 h-4z" fill="#f8f890"/><path d="M8 10 h7 l-3 4 h-7z" fill="url(#dth)"/><rect x="4" y="4" width="1" height="1" fill="#808040"/><rect x="6" y="4" width="1" height="1" fill="#808040"/><rect x="8" y="5" width="1" height="1" fill="#808040"/><rect x="10" y="5" width="1" height="1" fill="#808040"/><rect x="12" y="5" width="1" height="1" fill="#808040"/><rect x="2" y="6" width="1" height="1" fill="#808040"/><rect x="2" y="8" width="1" height="1" fill="#808040"/><rect x="2" y="10" width="1" height="1" fill="#808040"/><rect x="2" y="12" width="1" height="1" fill="#808040"/><rect x="13" y="7" width="1" height="1" fill="#808040"/><rect x="13" y="9" width="1" height="1" fill="#808040"/><rect x="3" y="14" width="1" height="1" fill="#000"/><rect x="5" y="14" width="1" height="1" fill="#000"/><rect x="7" y="14" width="1" height="1" fill="#000"/><rect x="9" y="14" width="1" height="1" fill="#000"/><rect x="11" y="14" width="1" height="1" fill="#000"/><rect x="10" y="3" width="1" height="1" fill="#000"/><rect x="11" y="2" width="1" height="1" fill="#000"/><rect x="13" y="2" width="1" height="1" fill="#000"/><rect x="14" y="3" width="1" height="1" fill="#000"/><rect x="15" y="4" width="1" height="1" fill="#000"/><rect x="16" y="3" width="1" height="1" fill="#000"/><rect x="16" y="5" width="1" height="1" fill="#000"/><rect x="14" y="5" width="1" height="1" fill="#000"/><rect x="12" y="3" width="1" height="1" fill="#000"/></svg></div>
<div class="sk" style="left:666px;top:347px;width:104px;height:18px;background:#C9C8CE"></div>
<div class="sk" style="left:106px;top:365px;width:80px;height:18px;background:#fff"></div>
<div class="sk" style="left:186px;top:365px;width:80px;height:18px;background:#fff"></div>
<div class="sk" style="left:266px;top:365px;width:106px;height:18px;background:#fff"></div>
<div class="sk" style="left:372px;top:365px;width:80px;height:18px;background:#fff"></div>
<div class="sk" style="left:452px;top:365px;width:80px;height:18px;background:#E0E0E0"></div>
<div class="sk" style="left:532px;top:365px;width:115px;height:18px;background:#fff"></div>
<div class="rb" style="left:647px;top:365px;width:19px;height:18px;"><svg width="19" height="18"><path d="M3 5 h4 l1 1 h5 v3 l-1 2 l-3 3 h-6z" fill="#ecec50"/><path d="M4 7 h6 l-2 4 h-4z" fill="#f8f890"/><path d="M8 10 h7 l-3 4 h-7z" fill="url(#dth)"/><rect x="4" y="4" width="1" height="1" fill="#808040"/><rect x="6" y="4" width="1" height="1" fill="#808040"/><rect x="8" y="5" width="1" height="1" fill="#808040"/><rect x="10" y="5" width="1" height="1" fill="#808040"/><rect x="12" y="5" width="1" height="1" fill="#808040"/><rect x="2" y="6" width="1" height="1" fill="#808040"/><rect x="2" y="8" width="1" height="1" fill="#808040"/><rect x="2" y="10" width="1" height="1" fill="#808040"/><rect x="2" y="12" width="1" height="1" fill="#808040"/><rect x="13" y="7" width="1" height="1" fill="#808040"/><rect x="13" y="9" width="1" height="1" fill="#808040"/><rect x="3" y="14" width="1" height="1" fill="#000"/><rect x="5" y="14" width="1" height="1" fill="#000"/><rect x="7" y="14" width="1" height="1" fill="#000"/><rect x="9" y="14" width="1" height="1" fill="#000"/><rect x="11" y="14" width="1" height="1" fill="#000"/><rect x="10" y="3" width="1" height="1" fill="#000"/><rect x="11" y="2" width="1" height="1" fill="#000"/><rect x="13" y="2" width="1" height="1" fill="#000"/><rect x="14" y="3" width="1" height="1" fill="#000"/><rect x="15" y="4" width="1" height="1" fill="#000"/><rect x="16" y="3" width="1" height="1" fill="#000"/><rect x="16" y="5" width="1" height="1" fill="#000"/><rect x="14" y="5" width="1" height="1" fill="#000"/><rect x="12" y="3" width="1" height="1" fill="#000"/></svg></div>
<div class="sk" style="left:666px;top:365px;width:104px;height:18px;background:#C9C8CE"></div>
<div class="sk" style="left:106px;top:384px;width:80px;height:18px;background:#fff"></div>
<div class="sk" style="left:186px;top:384px;width:80px;height:18px;background:#fff"></div>
<div class="sk" style="left:266px;top:384px;width:106px;height:18px;background:#fff"></div>
<div class="sk" style="left:372px;top:384px;width:80px;height:18px;background:#fff"></div>
<div class="sk" style="left:452px;top:384px;width:80px;height:18px;background:#E0E0E0"></div>
<div class="sk" style="left:532px;top:384px;width:115px;height:18px;background:#fff"></div>
<div class="rb" style="left:647px;top:384px;width:19px;height:18px;"><svg width="19" height="18"><path d="M3 6 h11 v4 h-11z" fill="url(#dthg2)"/><path d="M6 11 h9 l-3 3 h-8z" fill="#eef070"/><rect x="4" y="4" width="1" height="1" fill="#707070"/><rect x="6" y="4" width="1" height="1" fill="#707070"/><rect x="7" y="5" width="1" height="1" fill="#707070"/><rect x="9" y="5" width="1" height="1" fill="#707070"/><rect x="11" y="5" width="1" height="1" fill="#707070"/><rect x="2" y="6" width="1" height="1" fill="#707070"/><rect x="2" y="8" width="1" height="1" fill="#707070"/><rect x="2" y="10" width="1" height="1" fill="#707070"/><rect x="2" y="12" width="1" height="1" fill="#707070"/><rect x="6" y="10" width="1" height="1" fill="#707070"/><rect x="8" y="10" width="1" height="1" fill="#707070"/><rect x="10" y="10" width="1" height="1" fill="#707070"/><rect x="12" y="10" width="1" height="1" fill="#707070"/><rect x="3" y="13" width="1" height="1" fill="#707070"/><rect x="4" y="12" width="1" height="1" fill="#707070"/><rect x="5" y="11" width="1" height="1" fill="#707070"/><rect x="12" y="2" width="1" height="1" fill="#000"/><rect x="16" y="2" width="1" height="1" fill="#000"/><rect x="16" y="4" width="1" height="1" fill="#000"/><rect x="15" y="5" width="1" height="1" fill="#000"/><rect x="13" y="5" width="1" height="1" fill="#000"/><rect x="4" y="14" width="1" height="1" fill="#000"/><rect x="6" y="14" width="1" height="1" fill="#000"/><rect x="8" y="14" width="1" height="1" fill="#000"/><rect x="10" y="14" width="1" height="1" fill="#000"/><rect x="12" y="14" width="1" height="1" fill="#000"/><rect x="14" y="12" width="1" height="1" fill="#000"/><rect x="15" y="11" width="1" height="1" fill="#000"/></svg></div>
<div class="sk" style="left:666px;top:384px;width:104px;height:18px;background:#C9C8CE"></div>
<div class="sk" style="left:106px;top:402px;width:80px;height:18px;background:#fff"></div>
<div class="sk" style="left:186px;top:402px;width:80px;height:18px;background:#fff"></div>
<div class="sk" style="left:266px;top:402px;width:106px;height:18px;background:#fff"></div>
<div class="sk" style="left:372px;top:402px;width:80px;height:18px;background:#fff"></div>
<div class="sk" style="left:452px;top:402px;width:80px;height:18px;background:#E0E0E0"></div>
<div class="sk" style="left:532px;top:402px;width:115px;height:18px;background:#fff"></div>
<div class="rb" style="left:647px;top:402px;width:19px;height:18px;"><svg width="19" height="18"><path d="M3 5 h4 l1 1 h5 v3 l-1 2 l-3 3 h-6z" fill="#ecec50"/><path d="M4 7 h6 l-2 4 h-4z" fill="#f8f890"/><path d="M8 10 h7 l-3 4 h-7z" fill="url(#dth)"/><rect x="4" y="4" width="1" height="1" fill="#808040"/><rect x="6" y="4" width="1" height="1" fill="#808040"/><rect x="8" y="5" width="1" height="1" fill="#808040"/><rect x="10" y="5" width="1" height="1" fill="#808040"/><rect x="12" y="5" width="1" height="1" fill="#808040"/><rect x="2" y="6" width="1" height="1" fill="#808040"/><rect x="2" y="8" width="1" height="1" fill="#808040"/><rect x="2" y="10" width="1" height="1" fill="#808040"/><rect x="2" y="12" width="1" height="1" fill="#808040"/><rect x="13" y="7" width="1" height="1" fill="#808040"/><rect x="13" y="9" width="1" height="1" fill="#808040"/><rect x="3" y="14" width="1" height="1" fill="#000"/><rect x="5" y="14" width="1" height="1" fill="#000"/><rect x="7" y="14" width="1" height="1" fill="#000"/><rect x="9" y="14" width="1" height="1" fill="#000"/><rect x="11" y="14" width="1" height="1" fill="#000"/><rect x="10" y="3" width="1" height="1" fill="#000"/><rect x="11" y="2" width="1" height="1" fill="#000"/><rect x="13" y="2" width="1" height="1" fill="#000"/><rect x="14" y="3" width="1" height="1" fill="#000"/><rect x="15" y="4" width="1" height="1" fill="#000"/><rect x="16" y="3" width="1" height="1" fill="#000"/><rect x="16" y="5" width="1" height="1" fill="#000"/><rect x="14" y="5" width="1" height="1" fill="#000"/><rect x="12" y="3" width="1" height="1" fill="#000"/></svg></div>
<div class="sk" style="left:666px;top:402px;width:104px;height:18px;background:#C9C8CE"></div>
<div class="sk" style="left:106px;top:421px;width:80px;height:18px;background:#fff"></div>
<div class="sk" style="left:186px;top:421px;width:80px;height:18px;background:#fff"></div>
<div class="sk" style="left:266px;top:421px;width:106px;height:18px;background:#fff"></div>
<div class="sk" style="left:372px;top:421px;width:80px;height:18px;background:#fff"></div>
<div class="sk" style="left:452px;top:421px;width:80px;height:18px;background:#E0E0E0"></div>
<div class="sk" style="left:532px;top:421px;width:115px;height:18px;background:#fff"></div>
<div class="rb" style="left:647px;top:421px;width:19px;height:18px;"><svg width="19" height="18"><path d="M3 5 h4 l1 1 h5 v3 l-1 2 l-3 3 h-6z" fill="#ecec50"/><path d="M4 7 h6 l-2 4 h-4z" fill="#f8f890"/><path d="M8 10 h7 l-3 4 h-7z" fill="url(#dth)"/><rect x="4" y="4" width="1" height="1" fill="#808040"/><rect x="6" y="4" width="1" height="1" fill="#808040"/><rect x="8" y="5" width="1" height="1" fill="#808040"/><rect x="10" y="5" width="1" height="1" fill="#808040"/><rect x="12" y="5" width="1" height="1" fill="#808040"/><rect x="2" y="6" width="1" height="1" fill="#808040"/><rect x="2" y="8" width="1" height="1" fill="#808040"/><rect x="2" y="10" width="1" height="1" fill="#808040"/><rect x="2" y="12" width="1" height="1" fill="#808040"/><rect x="13" y="7" width="1" height="1" fill="#808040"/><rect x="13" y="9" width="1" height="1" fill="#808040"/><rect x="3" y="14" width="1" height="1" fill="#000"/><rect x="5" y="14" width="1" height="1" fill="#000"/><rect x="7" y="14" width="1" height="1" fill="#000"/><rect x="9" y="14" width="1" height="1" fill="#000"/><rect x="11" y="14" width="1" height="1" fill="#000"/><rect x="10" y="3" width="1" height="1" fill="#000"/><rect x="11" y="2" width="1" height="1" fill="#000"/><rect x="13" y="2" width="1" height="1" fill="#000"/><rect x="14" y="3" width="1" height="1" fill="#000"/><rect x="15" y="4" width="1" height="1" fill="#000"/><rect x="16" y="3" width="1" height="1" fill="#000"/><rect x="16" y="5" width="1" height="1" fill="#000"/><rect x="14" y="5" width="1" height="1" fill="#000"/><rect x="12" y="3" width="1" height="1" fill="#000"/></svg></div>
<div class="sk" style="left:666px;top:421px;width:104px;height:18px;background:#C9C8CE"></div>
<div class="t" style="left:108px;top:350px;font-size:12px;line-height:14px;color:#808080;">31394</div>
<div class="t" style="left:188px;top:350px;font-size:12px;line-height:14px;color:#808080;">31228</div>
<div class="t" style="left:268px;top:350px;font-size:12px;line-height:14px;color:#808080;">Выпуск</div>
<div class="t" style="left:374px;top:350px;font-size:12px;line-height:14px;color:#808080;">01.01.2008</div>
<div class="t" style="left:534px;top:350px;font-size:12px;line-height:14px;color:#808080;">ОткрытыйОбъект</div>
<div class="t" style="left:668px;top:350px;font-size:12px;line-height:14px;color:#a0a0a8;">Потребитель 1</div>
<div class="rb" style="left:104px;top:448px;width:100px;height:24px;"><div class="t" style="left:11px;top:6px;font-size:12px;color:#808080;line-height:14px">Процент канализации</div></div>
<div class="t" style="left:391px;top:453px;font-size:12px;line-height:14px;width:300px;text-align:right;">Код потребителя</div>
<div class="sk" style="left:696px;top:450px;width:74px;height:18px;background:#C9C8CE"></div>
<div class="t" style="left:467px;top:453px;font-size:12px;line-height:14px;color:#a0a0a8;width:300px;text-align:right;">77728360</div>
<div class="fr" style="left:148px;top:373px;width:476px;height:347px;background:#D4D0C8"></div>
<div style="left:152px;top:377px;width:468px;height:18px;background:#0A246A"></div>
<svg style="left:153px;top:378px" width="14" height="13"><rect x="1" y="0" width="12" height="12" fill="#a8dce0"/><path d="M1 0 h4 v2 h-4z M9 1 h3 v3 h-3z M1 9 h2 v3 h-2z M10 10 h3 v2 h-3z" fill="#28a0a8"/><rect x="1" y="12" width="12" height="1" fill="#c0a8d0" opacity=".6"/><circle cx="6" cy="3.5" r="2.5" fill="#d0105a"/><circle cx="5.3" cy="2.7" r="0.8" fill="#ff90c0"/><rect x="1.5" y="7" width="4.5" height="4" fill="#000090"/><path d="M8 5 L12 7.5 L8.5 10Z" fill="#c01818"/><rect x="7" y="9.5" width="5" height="2" fill="#30b080"/></svg>
<div class="t" style="left:172px;top:380px;font-size:11px;line-height:13px;color:#fff;font-weight:bold;letter-spacing:0.59px;">Процент канализации выпуска [Колодец № 31394]</div>
<div class="rb" style="left:568px;top:379px;width:16px;height:14px;"><svg width="16" height="14"><rect x="4" y="9" width="6" height="1"/><rect x="4" y="10" width="6" height="1"/></svg></div>
<div class="rb" style="left:584px;top:379px;width:16px;height:14px;"><svg width="16" height="14"><rect x="3" y="2" width="9" height="1"/><rect x="3" y="3" width="9" height="1"/><rect x="3" y="4" width="1" height="1"/><rect x="11" y="4" width="1" height="1"/><rect x="3" y="5" width="1" height="1"/><rect x="11" y="5" width="1" height="1"/><rect x="3" y="6" width="1" height="1"/><rect x="11" y="6" width="1" height="1"/><rect x="3" y="7" width="1" height="1"/><rect x="11" y="7" width="1" height="1"/><rect x="3" y="8" width="1" height="1"/><rect x="11" y="8" width="1" height="1"/><rect x="3" y="9" width="1" height="1"/><rect x="11" y="9" width="1" height="1"/><rect x="3" y="10" width="9" height="1"/></svg></div>
<div class="rb" style="left:602px;top:379px;width:16px;height:14px;"><svg width="16" height="14"><rect x="4" y="3" width="2" height="1"/><rect x="10" y="3" width="2" height="1"/><rect x="5" y="4" width="2" height="1"/><rect x="9" y="4" width="2" height="1"/><rect x="6" y="5" width="4" height="1"/><rect x="7" y="6" width="2" height="1"/><rect x="6" y="7" width="4" height="1"/><rect x="5" y="8" width="2" height="1"/><rect x="9" y="8" width="2" height="1"/><rect x="4" y="9" width="2" height="1"/><rect x="10" y="9" width="2" height="1"/></svg></div>
<div class="gb" style="left:160px;top:406px;width:452px;height:271px;"></div>
<div class="t" style="left:172px;top:401px;font-size:12px;line-height:14px;letter-spacing:0.37px;background:#D4D0C8;padding:0 3px;margin-left:-3px;">Значения</div>
<div class="t" style="left:76px;top:422px;font-size:12px;line-height:14px;width:300px;text-align:center;">Дата</div>
<div class="t" style="left:172px;top:422px;font-size:12px;line-height:14px;width:300px;text-align:center;">Значение</div>
<div class="t" style="left:266px;top:422px;font-size:12px;line-height:14px;width:300px;text-align:center;">Ед. измерения</div>
<div class="t" style="left:370px;top:422px;font-size:12px;line-height:14px;width:300px;text-align:center;">Состояние</div>
<div class="sk" style="left:183px;top:436px;width:86px;height:19px;background:#FFFFC8"></div>
<div class="sk" style="left:269px;top:436px;width:107px;height:19px;background:#FFFFC8"></div>
<div class="sk" style="left:376px;top:436px;width:79px;height:19px;background:#FFFFC8"></div>
<div class="sk" style="left:455px;top:436px;width:129px;height:19px;background:#FFFFC8"></div>
<div class="rb" style="left:586px;top:436px;width:20px;height:20px;"></div>
<div class="sk" style="left:183px;top:456px;width:86px;height:19px;background:#E0E0E0"></div>
<div class="sk" style="left:269px;top:456px;width:107px;height:19px;background:#E0E0E0"></div>
<div class="sk" style="left:376px;top:456px;width:79px;height:19px;background:#E0E0E0"></div>
<div class="sk" style="left:455px;top:456px;width:129px;height:19px;background:#E0E0E0"></div>
<div class="rb" style="left:586px;top:456px;width:20px;height:20px;"></div>
<div class="sk" style="left:183px;top:476px;width:86px;height:19px;background:#E0E0E0"></div>
<div class="sk" style="left:269px;top:476px;width:107px;height:19px;background:#E0E0E0"></div>
<div class="sk" style="left:376px;top:476px;width:79px;height:19px;background:#E0E0E0"></div>
<div class="sk" style="left:455px;top:476px;width:129px;height:19px;background:#E0E0E0"></div>
<div class="rb" style="left:586px;top:476px;width:20px;height:20px;"></div>
<div class="sk" style="left:183px;top:496px;width:86px;height:19px;background:#E0E0E0"></div>
<div class="sk" style="left:269px;top:496px;width:107px;height:19px;background:#E0E0E0"></div>
<div class="sk" style="left:376px;top:496px;width:79px;height:19px;background:#E0E0E0"></div>
<div class="sk" style="left:455px;top:496px;width:129px;height:19px;background:#E0E0E0"></div>
<div class="rb" style="left:586px;top:496px;width:20px;height:20px;"></div>
<div class="sk" style="left:183px;top:516px;width:86px;height:19px;background:#E0E0E0"></div>
<div class="sk" style="left:269px;top:516px;width:107px;height:19px;background:#E0E0E0"></div>
<div class="sk" style="left:376px;top:516px;width:79px;height:19px;background:#E0E0E0"></div>
<div class="sk" style="left:455px;top:516px;width:129px;height:19px;background:#E0E0E0"></div>
<div class="rb" style="left:586px;top:516px;width:20px;height:20px;"></div>
<div class="sk" style="left:183px;top:536px;width:86px;height:19px;background:#E0E0E0"></div>
<div class="sk" style="left:269px;top:536px;width:107px;height:19px;background:#E0E0E0"></div>
<div class="sk" style="left:376px;top:536px;width:79px;height:19px;background:#E0E0E0"></div>
<div class="sk" style="left:455px;top:536px;width:129px;height:19px;background:#E0E0E0"></div>
<div class="rb" style="left:586px;top:536px;width:20px;height:20px;"></div>
<div class="sk" style="left:183px;top:556px;width:86px;height:19px;background:#E0E0E0"></div>
<div class="sk" style="left:269px;top:556px;width:107px;height:19px;background:#E0E0E0"></div>
<div class="sk" style="left:376px;top:556px;width:79px;height:19px;background:#E0E0E0"></div>
<div class="sk" style="left:455px;top:556px;width:129px;height:19px;background:#E0E0E0"></div>
<div class="rb" style="left:586px;top:556px;width:20px;height:20px;"></div>
<div class="sk" style="left:183px;top:576px;width:86px;height:19px;background:#E0E0E0"></div>
<div class="sk" style="left:269px;top:576px;width:107px;height:19px;background:#E0E0E0"></div>
<div class="sk" style="left:376px;top:576px;width:79px;height:19px;background:#E0E0E0"></div>
<div class="sk" style="left:455px;top:576px;width:129px;height:19px;background:#E0E0E0"></div>
<div class="rb" style="left:586px;top:576px;width:20px;height:20px;"></div>
<div class="sk" style="left:183px;top:596px;width:86px;height:19px;background:#E0E0E0"></div>
<div class="sk" style="left:269px;top:596px;width:107px;height:19px;background:#E0E0E0"></div>
<div class="sk" style="left:376px;top:596px;width:79px;height:19px;background:#E0E0E0"></div>
<div class="sk" style="left:455px;top:596px;width:129px;height:19px;background:#E0E0E0"></div>
<div class="rb" style="left:586px;top:596px;width:20px;height:20px;"></div>
<div class="sk" style="left:183px;top:616px;width:86px;height:19px;background:#E0E0E0"></div>
<div class="sk" style="left:269px;top:616px;width:107px;height:19px;background:#E0E0E0"></div>
<div class="sk" style="left:376px;top:616px;width:79px;height:19px;background:#E0E0E0"></div>
<div class="sk" style="left:455px;top:616px;width:129px;height:19px;background:#E0E0E0"></div>
<div class="rb" style="left:586px;top:616px;width:20px;height:20px;"></div>
<div class="t" style="left:186px;top:439px;font-size:12px;line-height:14px;">01.01.2008</div>
<div class="t" style="left:73px;top:439px;font-size:12px;line-height:14px;width:300px;text-align:right;">100.000</div>
<div class="t" style="left:378px;top:439px;font-size:12px;line-height:14px;">%</div>
<div class="t" style="left:457px;top:439px;font-size:12px;line-height:14px;">ОткрытыйОбъект</div>
<div style="left:168px;top:436px;width:14px;height:199px;background:repeating-conic-gradient(#fff 0 25%,#D4D0C8 0 50%) 0 0/2px 2px"></div>
<div class="rb" style="left:168px;top:436px;width:14px;height:15px;"><svg width="14" height="15"><path d="M4 9 H10 L7 6Z" fill="#808080"/></svg></div>
<div class="rb" style="left:168px;top:619px;width:14px;height:16px;"><svg width="14" height="16"><path d="M4 7 H10 L7 10Z" fill="#808080"/></svg></div>
<div class="sk" style="left:184px;top:645px;width:85px;height:19px;background:#fff"></div>
<div class="sk" style="left:269px;top:645px;width:107px;height:19px;background:#fff"></div>
<div class="sk" style="left:376px;top:645px;width:79px;height:19px;background:#E0E0E0"></div>
<div class="t" style="left:378px;top:648px;font-size:12px;line-height:14px;">%</div>
<div class="rb" style="left:455px;top:645px;width:78px;height:20px;"><div class="t" style="left:0;width:78px;text-align:center;top:3px;font-size:12px;line-height:14px">Установить</div></div>
<div class="rb" style="left:328px;top:685px;width:64px;height:23px;"><div class="t" style="left:0;width:64px;text-align:center;top:5px;font-size:12px;line-height:14px">OK</div></div>
</body></html>
